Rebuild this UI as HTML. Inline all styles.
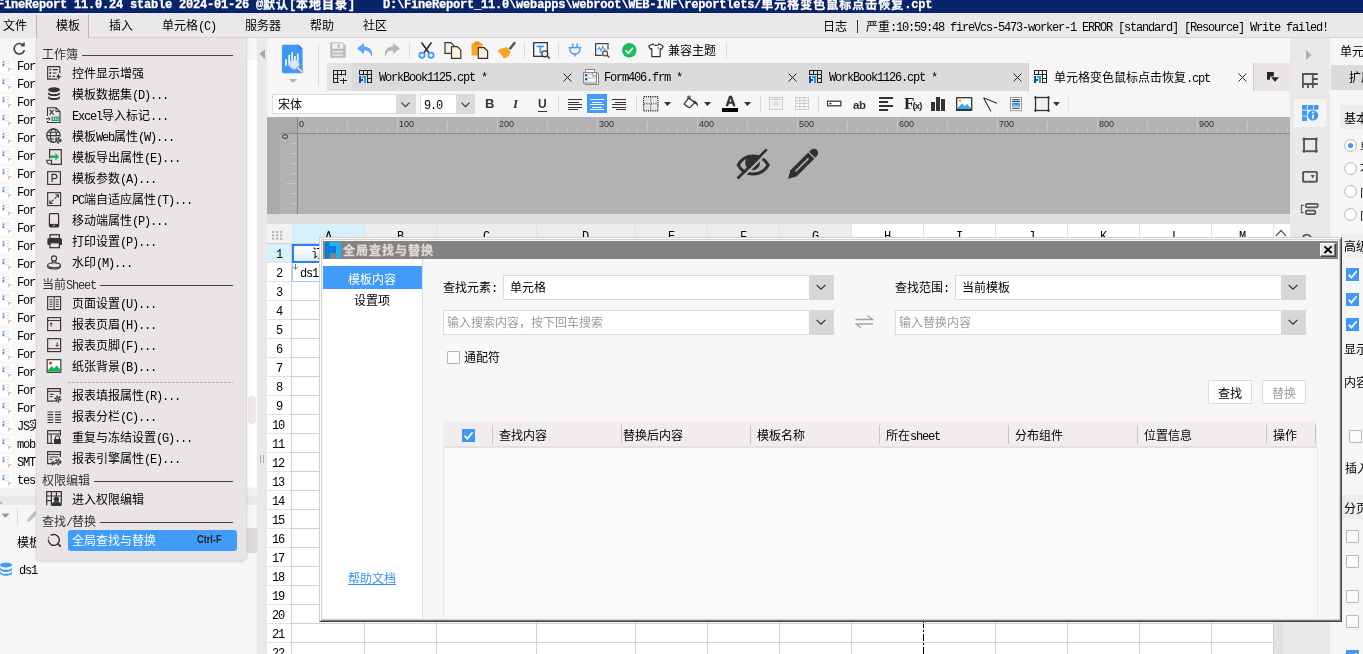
<!DOCTYPE html>
<html lang="zh-CN"><head><meta charset="utf-8"><title>FineReport</title>
<style>
html,body{margin:0;padding:0;}
body{width:1363px;height:654px;overflow:hidden;background:#f7f6f7;}
#app{will-change:transform;position:relative;width:1363px;height:654px;overflow:hidden;font-family:"Liberation Mono","Noto Sans CJK SC",monospace;font-size:12px;color:#000;}
.r{position:absolute;display:block;}
.t{position:absolute;white-space:pre;line-height:14px;height:14px;font-size:12px;}
.l{letter-spacing:-1.2px;}
.tb{position:absolute;white-space:pre;line-height:14px;height:14px;font-size:12px;font-weight:bold;letter-spacing:1px;-webkit-text-stroke:.3px currentColor;}
.tb .l,.tbt .l{letter-spacing:-0.2px;}
.tbt{position:absolute;white-space:pre;line-height:14px;height:14px;font-size:12px;font-weight:bold;letter-spacing:1px;-webkit-text-stroke:.3px currentColor;}
.tbt .c{position:relative;top:1px;}
.sa{position:absolute;white-space:pre;font-family:"Liberation Sans",sans-serif;}
.sa .l{letter-spacing:0;}

</style></head>
<body>
<div id="app">
<div class="r" style="left:0px;top:0px;width:1363px;height:13px;background:#0a246a;"></div>
<div class="tbt" style="left:-3px;top:-2px;color:#fff;"><span class="l">FineReport 11.0.24 stable 2024-01-26 @</span><span class="c">默认</span><span class="l">[</span><span class="c">本地目录</span><span class="l">] &nbsp; &nbsp;D:\FineReport_11.0\webapps\webroot\WEB-INF\reportlets/</span><span class="c">单元格变色鼠标点击恢复</span><span class="l">.cpt</span></div>
<div class="r" style="left:0px;top:13px;width:1363px;height:25px;background:#ebe8ec;"></div>
<div class="r" style="left:36px;top:14px;width:53px;height:24px;background:#e8e4e8;border-left:1px solid #b9b6ba;border-right:1px solid #b9b6ba;border-top:1px solid #f4f2f4;box-sizing:border-box;"></div>
<div class="r" style="left:89px;top:37px;width:1274px;height:1px;background:#d9d6da;"></div>
<div class="t" style="left:3px;top:20px;">文件</div>
<div class="t" style="left:56px;top:20px;">模板</div>
<div class="t" style="left:109px;top:20px;">插入</div>
<div class="t" style="left:162px;top:20px;">单元格<span class="l">(C)</span></div>
<div class="t" style="left:245px;top:20px;">服务器</div>
<div class="t" style="left:310px;top:20px;">帮助</div>
<div class="t" style="left:363px;top:20px;">社区</div>
<div class="t" style="left:823px;top:21px;">日志</div>
<div class="r" style="left:857px;top:20px;width:1px;height:13px;background:#333;"></div>
<div class="t" style="left:866px;top:21px;">严重<span class="l">:10:59:48 fireVcs-5473-worker-1 ERROR [standard] [Resource] Write failed!</span></div>
<div class="r" style="left:0px;top:38px;width:257px;height:22px;background:#f7f6f7;"></div>
<div class="r" style="left:0px;top:60px;width:257px;height:428px;background:#f8f8f8;"></div>
<svg class="r" style="left:12px;top:41px;" width="14" height="15" viewBox="0 0 14 15"><path d="M11.2 4.2A5.2 5.2 0 1 0 12.4 9" fill="none" stroke="#444" stroke-width="1.6"/><path d="M8.2 5.2 L12.8 5.6 L12.6 0.8 Z" fill="#444"/></svg>
<div class="r" style="left:0px;top:59px;width:12px;height:14px;background:#fff;"></div>
<svg class="r" style="left:0px;top:59px;" width="13" height="14" viewBox="0 0 13 14"><rect x="2" y="1" width="8" height="7" fill="#e9e9ea"/><rect x="4.6" y="2.4" width="4.6" height="1.6" fill="#fff"/><rect x="4.6" y="5" width="4.6" height="2" fill="#fff"/><rect x="2.8" y="2.6" width="1.4" height="1.2" fill="#1e86ea"/><rect x="2.8" y="5" width="1.4" height="2" fill="#1e86ea"/><path d="M8 9H12L8 13Z" fill="#c9c9c9"/></svg>
<div class="t" style="left:17px;top:60px;"><span class="l">For</span></div>
<div class="r" style="left:0px;top:77px;width:12px;height:14px;background:#fff;"></div>
<svg class="r" style="left:0px;top:77px;" width="13" height="14" viewBox="0 0 13 14"><rect x="2" y="1" width="8" height="7" fill="#e9e9ea"/><rect x="4.6" y="2.4" width="4.6" height="1.6" fill="#fff"/><rect x="4.6" y="5" width="4.6" height="2" fill="#fff"/><rect x="2.8" y="2.6" width="1.4" height="1.2" fill="#1e86ea"/><rect x="2.8" y="5" width="1.4" height="2" fill="#1e86ea"/><path d="M8 9H12L8 13Z" fill="#c9c9c9"/></svg>
<div class="t" style="left:17px;top:78px;"><span class="l">For</span></div>
<div class="r" style="left:0px;top:95px;width:12px;height:14px;background:#fff;"></div>
<svg class="r" style="left:0px;top:95px;" width="13" height="14" viewBox="0 0 13 14"><rect x="2" y="1" width="8" height="7" fill="#e9e9ea"/><rect x="4.6" y="2.4" width="4.6" height="1.6" fill="#fff"/><rect x="4.6" y="5" width="4.6" height="2" fill="#fff"/><rect x="2.8" y="2.6" width="1.4" height="1.2" fill="#1e86ea"/><rect x="2.8" y="5" width="1.4" height="2" fill="#1e86ea"/><path d="M8 9H12L8 13Z" fill="#c9c9c9"/></svg>
<div class="t" style="left:17px;top:96px;"><span class="l">For</span></div>
<div class="r" style="left:0px;top:113px;width:12px;height:14px;background:#fff;"></div>
<svg class="r" style="left:0px;top:113px;" width="13" height="14" viewBox="0 0 13 14"><rect x="2" y="1" width="8" height="7" fill="#e9e9ea"/><rect x="4.6" y="2.4" width="4.6" height="1.6" fill="#fff"/><rect x="4.6" y="5" width="4.6" height="2" fill="#fff"/><rect x="2.8" y="2.6" width="1.4" height="1.2" fill="#1e86ea"/><rect x="2.8" y="5" width="1.4" height="2" fill="#1e86ea"/><path d="M8 9H12L8 13Z" fill="#c9c9c9"/></svg>
<div class="t" style="left:17px;top:114px;"><span class="l">For</span></div>
<div class="r" style="left:0px;top:131px;width:12px;height:14px;background:#fff;"></div>
<svg class="r" style="left:0px;top:131px;" width="13" height="14" viewBox="0 0 13 14"><rect x="2" y="1" width="8" height="7" fill="#e9e9ea"/><rect x="4.6" y="2.4" width="4.6" height="1.6" fill="#fff"/><rect x="4.6" y="5" width="4.6" height="2" fill="#fff"/><rect x="2.8" y="2.6" width="1.4" height="1.2" fill="#1e86ea"/><rect x="2.8" y="5" width="1.4" height="2" fill="#1e86ea"/><path d="M8 9H12L8 13Z" fill="#c9c9c9"/></svg>
<div class="t" style="left:17px;top:132px;"><span class="l">For</span></div>
<div class="r" style="left:0px;top:149px;width:12px;height:14px;background:#fff;"></div>
<svg class="r" style="left:0px;top:149px;" width="13" height="14" viewBox="0 0 13 14"><rect x="2" y="1" width="8" height="7" fill="#e9e9ea"/><rect x="4.6" y="2.4" width="4.6" height="1.6" fill="#fff"/><rect x="4.6" y="5" width="4.6" height="2" fill="#fff"/><rect x="2.8" y="2.6" width="1.4" height="1.2" fill="#1e86ea"/><rect x="2.8" y="5" width="1.4" height="2" fill="#1e86ea"/><path d="M8 9H12L8 13Z" fill="#c9c9c9"/></svg>
<div class="t" style="left:17px;top:150px;"><span class="l">For</span></div>
<div class="r" style="left:0px;top:167px;width:12px;height:14px;background:#fff;"></div>
<svg class="r" style="left:0px;top:167px;" width="13" height="14" viewBox="0 0 13 14"><rect x="2" y="1" width="8" height="7" fill="#e9e9ea"/><rect x="4.6" y="2.4" width="4.6" height="1.6" fill="#fff"/><rect x="4.6" y="5" width="4.6" height="2" fill="#fff"/><rect x="2.8" y="2.6" width="1.4" height="1.2" fill="#1e86ea"/><rect x="2.8" y="5" width="1.4" height="2" fill="#1e86ea"/><path d="M8 9H12L8 13Z" fill="#c9c9c9"/></svg>
<div class="t" style="left:17px;top:168px;"><span class="l">For</span></div>
<div class="r" style="left:0px;top:185px;width:12px;height:14px;background:#fff;"></div>
<svg class="r" style="left:0px;top:185px;" width="13" height="14" viewBox="0 0 13 14"><rect x="2" y="1" width="8" height="7" fill="#e9e9ea"/><rect x="4.6" y="2.4" width="4.6" height="1.6" fill="#fff"/><rect x="4.6" y="5" width="4.6" height="2" fill="#fff"/><rect x="2.8" y="2.6" width="1.4" height="1.2" fill="#1e86ea"/><rect x="2.8" y="5" width="1.4" height="2" fill="#1e86ea"/><path d="M8 9H12L8 13Z" fill="#c9c9c9"/></svg>
<div class="t" style="left:17px;top:186px;"><span class="l">For</span></div>
<div class="r" style="left:0px;top:203px;width:12px;height:14px;background:#fff;"></div>
<svg class="r" style="left:0px;top:203px;" width="13" height="14" viewBox="0 0 13 14"><rect x="2" y="1" width="8" height="7" fill="#e9e9ea"/><rect x="4.6" y="2.4" width="4.6" height="1.6" fill="#fff"/><rect x="4.6" y="5" width="4.6" height="2" fill="#fff"/><rect x="2.8" y="2.6" width="1.4" height="1.2" fill="#1e86ea"/><rect x="2.8" y="5" width="1.4" height="2" fill="#1e86ea"/><path d="M8 9H12L8 13Z" fill="#c9c9c9"/></svg>
<div class="t" style="left:17px;top:204px;"><span class="l">For</span></div>
<div class="r" style="left:0px;top:221px;width:12px;height:14px;background:#fff;"></div>
<svg class="r" style="left:0px;top:221px;" width="13" height="14" viewBox="0 0 13 14"><rect x="2" y="1" width="8" height="7" fill="#e9e9ea"/><rect x="4.6" y="2.4" width="4.6" height="1.6" fill="#fff"/><rect x="4.6" y="5" width="4.6" height="2" fill="#fff"/><rect x="2.8" y="2.6" width="1.4" height="1.2" fill="#1e86ea"/><rect x="2.8" y="5" width="1.4" height="2" fill="#1e86ea"/><path d="M8 9H12L8 13Z" fill="#c9c9c9"/></svg>
<div class="t" style="left:17px;top:222px;"><span class="l">For</span></div>
<div class="r" style="left:0px;top:239px;width:12px;height:14px;background:#fff;"></div>
<svg class="r" style="left:0px;top:239px;" width="13" height="14" viewBox="0 0 13 14"><rect x="2" y="1" width="8" height="7" fill="#e9e9ea"/><rect x="4.6" y="2.4" width="4.6" height="1.6" fill="#fff"/><rect x="4.6" y="5" width="4.6" height="2" fill="#fff"/><rect x="2.8" y="2.6" width="1.4" height="1.2" fill="#1e86ea"/><rect x="2.8" y="5" width="1.4" height="2" fill="#1e86ea"/><path d="M8 9H12L8 13Z" fill="#c9c9c9"/></svg>
<div class="t" style="left:17px;top:240px;"><span class="l">For</span></div>
<div class="r" style="left:0px;top:257px;width:12px;height:14px;background:#fff;"></div>
<svg class="r" style="left:0px;top:257px;" width="13" height="14" viewBox="0 0 13 14"><rect x="2" y="1" width="8" height="7" fill="#e9e9ea"/><rect x="4.6" y="2.4" width="4.6" height="1.6" fill="#fff"/><rect x="4.6" y="5" width="4.6" height="2" fill="#fff"/><rect x="2.8" y="2.6" width="1.4" height="1.2" fill="#1e86ea"/><rect x="2.8" y="5" width="1.4" height="2" fill="#1e86ea"/><path d="M8 9H12L8 13Z" fill="#c9c9c9"/></svg>
<div class="t" style="left:17px;top:258px;"><span class="l">For</span></div>
<div class="r" style="left:0px;top:275px;width:12px;height:14px;background:#fff;"></div>
<svg class="r" style="left:0px;top:275px;" width="13" height="14" viewBox="0 0 13 14"><rect x="2" y="1" width="8" height="7" fill="#e9e9ea"/><rect x="4.6" y="2.4" width="4.6" height="1.6" fill="#fff"/><rect x="4.6" y="5" width="4.6" height="2" fill="#fff"/><rect x="2.8" y="2.6" width="1.4" height="1.2" fill="#1e86ea"/><rect x="2.8" y="5" width="1.4" height="2" fill="#1e86ea"/><path d="M8 9H12L8 13Z" fill="#c9c9c9"/></svg>
<div class="t" style="left:17px;top:276px;"><span class="l">For</span></div>
<div class="r" style="left:0px;top:293px;width:12px;height:14px;background:#fff;"></div>
<svg class="r" style="left:0px;top:293px;" width="13" height="14" viewBox="0 0 13 14"><rect x="2" y="1" width="8" height="7" fill="#e9e9ea"/><rect x="4.6" y="2.4" width="4.6" height="1.6" fill="#fff"/><rect x="4.6" y="5" width="4.6" height="2" fill="#fff"/><rect x="2.8" y="2.6" width="1.4" height="1.2" fill="#1e86ea"/><rect x="2.8" y="5" width="1.4" height="2" fill="#1e86ea"/><path d="M8 9H12L8 13Z" fill="#c9c9c9"/></svg>
<div class="t" style="left:17px;top:294px;"><span class="l">For</span></div>
<div class="r" style="left:0px;top:311px;width:12px;height:14px;background:#fff;"></div>
<svg class="r" style="left:0px;top:311px;" width="13" height="14" viewBox="0 0 13 14"><rect x="2" y="1" width="8" height="7" fill="#e9e9ea"/><rect x="4.6" y="2.4" width="4.6" height="1.6" fill="#fff"/><rect x="4.6" y="5" width="4.6" height="2" fill="#fff"/><rect x="2.8" y="2.6" width="1.4" height="1.2" fill="#1e86ea"/><rect x="2.8" y="5" width="1.4" height="2" fill="#1e86ea"/><path d="M8 9H12L8 13Z" fill="#c9c9c9"/></svg>
<div class="t" style="left:17px;top:312px;"><span class="l">For</span></div>
<div class="r" style="left:0px;top:329px;width:12px;height:14px;background:#fff;"></div>
<svg class="r" style="left:0px;top:329px;" width="13" height="14" viewBox="0 0 13 14"><rect x="2" y="1" width="8" height="7" fill="#e9e9ea"/><rect x="4.6" y="2.4" width="4.6" height="1.6" fill="#fff"/><rect x="4.6" y="5" width="4.6" height="2" fill="#fff"/><rect x="2.8" y="2.6" width="1.4" height="1.2" fill="#1e86ea"/><rect x="2.8" y="5" width="1.4" height="2" fill="#1e86ea"/><path d="M8 9H12L8 13Z" fill="#c9c9c9"/></svg>
<div class="t" style="left:17px;top:330px;"><span class="l">For</span></div>
<div class="r" style="left:0px;top:347px;width:12px;height:14px;background:#fff;"></div>
<svg class="r" style="left:0px;top:347px;" width="13" height="14" viewBox="0 0 13 14"><rect x="2" y="1" width="8" height="7" fill="#e9e9ea"/><rect x="4.6" y="2.4" width="4.6" height="1.6" fill="#fff"/><rect x="4.6" y="5" width="4.6" height="2" fill="#fff"/><rect x="2.8" y="2.6" width="1.4" height="1.2" fill="#1e86ea"/><rect x="2.8" y="5" width="1.4" height="2" fill="#1e86ea"/><path d="M8 9H12L8 13Z" fill="#c9c9c9"/></svg>
<div class="t" style="left:17px;top:348px;"><span class="l">For</span></div>
<div class="r" style="left:0px;top:365px;width:12px;height:14px;background:#fff;"></div>
<svg class="r" style="left:0px;top:365px;" width="13" height="14" viewBox="0 0 13 14"><rect x="2" y="1" width="8" height="7" fill="#e9e9ea"/><rect x="4.6" y="2.4" width="4.6" height="1.6" fill="#fff"/><rect x="4.6" y="5" width="4.6" height="2" fill="#fff"/><rect x="2.8" y="2.6" width="1.4" height="1.2" fill="#1e86ea"/><rect x="2.8" y="5" width="1.4" height="2" fill="#1e86ea"/><path d="M8 9H12L8 13Z" fill="#c9c9c9"/></svg>
<div class="t" style="left:17px;top:366px;"><span class="l">For</span></div>
<div class="r" style="left:0px;top:383px;width:12px;height:14px;background:#fff;"></div>
<svg class="r" style="left:0px;top:383px;" width="13" height="14" viewBox="0 0 13 14"><rect x="2" y="1" width="8" height="7" fill="#e9e9ea"/><rect x="4.6" y="2.4" width="4.6" height="1.6" fill="#fff"/><rect x="4.6" y="5" width="4.6" height="2" fill="#fff"/><rect x="2.8" y="2.6" width="1.4" height="1.2" fill="#1e86ea"/><rect x="2.8" y="5" width="1.4" height="2" fill="#1e86ea"/><path d="M8 9H12L8 13Z" fill="#c9c9c9"/></svg>
<div class="t" style="left:17px;top:384px;"><span class="l">For</span></div>
<div class="r" style="left:0px;top:401px;width:12px;height:14px;background:#fff;"></div>
<svg class="r" style="left:0px;top:401px;" width="13" height="14" viewBox="0 0 13 14"><rect x="2" y="1" width="8" height="7" fill="#e9e9ea"/><rect x="4.6" y="2.4" width="4.6" height="1.6" fill="#fff"/><rect x="4.6" y="5" width="4.6" height="2" fill="#fff"/><rect x="2.8" y="2.6" width="1.4" height="1.2" fill="#1e86ea"/><rect x="2.8" y="5" width="1.4" height="2" fill="#1e86ea"/><path d="M8 9H12L8 13Z" fill="#c9c9c9"/></svg>
<div class="t" style="left:17px;top:402px;"><span class="l">For</span></div>
<div class="r" style="left:0px;top:419px;width:12px;height:14px;background:#fff;"></div>
<svg class="r" style="left:0px;top:419px;" width="13" height="14" viewBox="0 0 13 14"><rect x="2" y="1" width="8" height="7" fill="#e9e9ea"/><rect x="4.6" y="2.4" width="4.6" height="1.6" fill="#fff"/><rect x="4.6" y="5" width="4.6" height="2" fill="#fff"/><rect x="2.8" y="2.6" width="1.4" height="1.2" fill="#1e86ea"/><rect x="2.8" y="5" width="1.4" height="2" fill="#1e86ea"/><path d="M8 9H12L8 13Z" fill="#c9c9c9"/></svg>
<div class="t" style="left:17px;top:420px;"><span class="l">JS</span>实</div>
<div class="r" style="left:0px;top:437px;width:12px;height:14px;background:#fff;"></div>
<svg class="r" style="left:0px;top:437px;" width="13" height="14" viewBox="0 0 13 14"><rect x="2" y="1" width="8" height="7" fill="#e9e9ea"/><rect x="4.6" y="2.4" width="4.6" height="1.6" fill="#fff"/><rect x="4.6" y="5" width="4.6" height="2" fill="#fff"/><rect x="2.8" y="2.6" width="1.4" height="1.2" fill="#1e86ea"/><rect x="2.8" y="5" width="1.4" height="2" fill="#1e86ea"/><path d="M8 9H12L8 13Z" fill="#c9c9c9"/></svg>
<div class="t" style="left:17px;top:438px;"><span class="l">mob</span></div>
<div class="r" style="left:0px;top:455px;width:12px;height:14px;background:#fff;"></div>
<svg class="r" style="left:0px;top:455px;" width="13" height="14" viewBox="0 0 13 14"><rect x="2" y="1" width="8" height="7" fill="#e9e9ea"/><rect x="4.6" y="2.4" width="4.6" height="1.6" fill="#fff"/><rect x="4.6" y="5" width="4.6" height="2" fill="#fff"/><rect x="2.8" y="2.6" width="1.4" height="1.2" fill="#1e86ea"/><rect x="2.8" y="5" width="1.4" height="2" fill="#1e86ea"/><path d="M8 9H12L8 13Z" fill="#c9c9c9"/></svg>
<div class="t" style="left:17px;top:456px;"><span class="l">SMT</span></div>
<div class="r" style="left:0px;top:473px;width:12px;height:14px;background:#fff;"></div>
<svg class="r" style="left:0px;top:473px;" width="13" height="14" viewBox="0 0 13 14"><rect x="2" y="1" width="8" height="7" fill="#e9e9ea"/><rect x="4.6" y="2.4" width="4.6" height="1.6" fill="#fff"/><rect x="4.6" y="5" width="4.6" height="2" fill="#fff"/><rect x="2.8" y="2.6" width="1.4" height="1.2" fill="#1e86ea"/><rect x="2.8" y="5" width="1.4" height="2" fill="#1e86ea"/><path d="M8 9H12L8 13Z" fill="#c9c9c9"/></svg>
<div class="t" style="left:17px;top:474px;"><span class="l">tes</span></div>
<div class="r" style="left:247px;top:60px;width:10px;height:426px;background:#fff;"></div>
<div class="r" style="left:248px;top:396px;width:8px;height:28px;background:#ebe7eb;border-radius:4px;"></div>
<div class="r" style="left:0px;top:488px;width:257px;height:7px;background:#f1eff1;"></div>
<div class="r" style="left:0px;top:495px;width:257px;height:10px;background:#ebe8ec;"></div>
<div class="r" style="left:0px;top:495px;width:257px;height:1px;background:#f6f5f6;"></div>
<svg class="r" style="left:0px;top:499px;" width="4" height="6" viewBox="0 0 4 6"><path d="M-2 1.5L2.2 5" fill="none" stroke="#aaa" stroke-width="1.3"/></svg>
<div class="r" style="left:0px;top:505px;width:257px;height:23px;background:#f7f6f7;"></div>
<svg class="r" style="left:1px;top:512px;" width="10" height="8" viewBox="0 0 10 8"><path d="M0.5 1.5H8.5L4.5 6Z" fill="#999"/></svg>
<div class="r" style="left:17px;top:508px;width:1px;height:17px;background:#dcdadc;"></div>
<svg class="r" style="left:26px;top:509px;" width="13" height="14" viewBox="0 0 13 14"><path d="M1 13 L2.2 9 L9.5 1.5 L12 4 L4.8 11.6 Z" fill="#c4c2c4"/></svg>
<div class="r" style="left:0px;top:528px;width:257px;height:25px;background:#dddadd;"></div>
<div class="r" style="left:0px;top:528px;width:128px;height:25px;background:#f7f6f7;"></div>
<div class="t" style="left:17px;top:537px;">模板数据集</div>
<svg class="r" style="left:0px;top:562px;" width="13" height="14" viewBox="0 0 13 14"><ellipse cx="6" cy="3" rx="6" ry="2.6" fill="#419bf9"/><path d="M0 5.2 C0 8.6 12 8.6 12 5.2 V7.2 C12 10.8 0 10.8 0 7.2Z" fill="#419bf9"/><path d="M0 9.2 C0 12.6 12 12.6 12 9.2 V11 C12 14.6 0 14.6 0 11Z" fill="#419bf9"/></svg>
<div class="t" style="left:19px;top:564px;"><span class="l">ds1</span></div>
<div class="r" style="left:257px;top:38px;width:10px;height:616px;background:#ebe8ec;"></div>
<svg class="r" style="left:258px;top:48px;" width="8" height="12" viewBox="0 0 8 12"><path d="M7 1 V11 L1.5 6 Z" fill="#a9a7a9"/></svg>
<div class="r" style="left:260px;top:455px;width:1px;height:8px;background:#aaa;"></div>
<div class="r" style="left:263px;top:455px;width:1px;height:8px;background:#aaa;"></div>
<div class="r" style="left:267px;top:38px;width:1023px;height:79px;background:#f7f6f7;"></div>
<svg class="r" style="left:281px;top:44px;" width="24" height="32" viewBox="0 0 24 32"><path d="M2.5 .8H17.6L21.6 4.8V27.6a1.6 1.6 0 0 1-1.6 1.6H2.5A1.6 1.6 0 0 1 .9 27.6V2.4A1.6 1.6 0 0 1 2.5 .8Z" fill="#3f97f7"/>
<path d="M17.6 .8V4.8H21.6Z" fill="#2a7de0"/>
<rect x="4.2" y="15.2" width="1.6" height="6.4" fill="#fff"/><rect x="7.4" y="11" width="1.6" height="10.6" fill="#fff"/><rect x="10.4" y="8" width="1.5" height="10" fill="#fff"/><rect x="13.2" y="12" width="1.5" height="6" fill="#fff"/><rect x="16" y="9.6" width="1.6" height="9" fill="#fff"/>
<circle cx="13.4" cy="20.4" r="4.7" fill="#e6eef9" fill-opacity=".9" stroke="#c9ccd2" stroke-width="1.1"/>
<path d="M16.9 24L21 28" stroke="#8a8a8a" stroke-width="2.6" stroke-linecap="round"/><path d="M16.9 24L21 28" stroke="#efefef" stroke-width="1.4" stroke-linecap="round"/></svg>
<svg class="r" style="left:289px;top:79px;" width="9" height="5" viewBox="0 0 9 5"><path d="M0 0H8L4 4Z" fill="#b5b3b5"/></svg>
<div class="r" style="left:318px;top:44px;width:1px;height:42px;background:#dcdadc;"></div>
<svg class="r" style="left:330px;top:42px;" width="16" height="16" viewBox="0 0 16 16"><path d="M1.4 .3H12.4L15.8 3.6V14.4a1.3 1.3 0 0 1-1.3 1.3H1.5A1.3 1.3 0 0 1 .2 14.4V1.5A1.2 1.2 0 0 1 1.4 .3Z" fill="#bdbbbd"/><rect x="2.4" y="1.2" width="10.8" height="5.4" fill="#f3f2f3"/><rect x="7.4" y="2.2" width="2.6" height="3.6" fill="#bdbbbd"/><rect x="2.4" y="9.2" width="10.6" height="1.2" fill="#f3f2f3"/><rect x="2.4" y="12.5" width="10.6" height="1.2" fill="#f3f2f3"/></svg>
<svg class="r" style="left:357px;top:43px;" width="17" height="15" viewBox="0 0 17 15"><path d="M7 0 L0 5.5 L7 11 V7.6 C11 7.4 13.6 9.4 14.6 14 C16.6 8 13 3.6 7 3.4 Z" fill="#5ba6f8"/></svg>
<svg class="r" style="left:383px;top:43px;" width="17" height="15" viewBox="0 0 17 15"><path d="M10 0 L17 5.5 L10 11 V7.6 C6 7.4 3.4 9.4 2.4 14 C0.4 8 4 3.6 10 3.4 Z" fill="#b9b7b9"/></svg>
<div class="r" style="left:409px;top:43px;width:1px;height:16px;background:#dcdadc;"></div>
<svg class="r" style="left:418px;top:42px;" width="17" height="17" viewBox="0 0 17 17"><path d="M3.5 0.5 L11.5 11.5 M13.5 0.5 L5.5 11.5" stroke="#333" stroke-width="1.7" fill="none"/><circle cx="4" cy="13.2" r="2.6" fill="none" stroke="#3f97f7" stroke-width="1.7"/><circle cx="13" cy="13.2" r="2.6" fill="none" stroke="#3f97f7" stroke-width="1.7"/></svg>
<svg class="r" style="left:444px;top:42px;" width="18" height="17" viewBox="0 0 18 17"><path d="M1 .7H7L10 3.7V11.3H1Z" fill="#fdf4dd" stroke="#333" stroke-width="1.2"/><path d="M7.5 4.7H13.5L16.8 7.9V16.3H7.5Z" fill="#fdf4dd" stroke="#333" stroke-width="1.2"/></svg>
<svg class="r" style="left:471px;top:41px;" width="18" height="18" viewBox="0 0 18 18"><rect x=".5" y="2" width="11" height="12.5" rx="1" fill="#f6a623"/><rect x="3.5" y=".5" width="5" height="3" rx=".8" fill="#e38f0c"/><path d="M7.3 6.7H13.2L16.6 10V17.3H7.3Z" fill="#fdf4dd" stroke="#333" stroke-width="1.2"/></svg>
<svg class="r" style="left:497px;top:41px;" width="19" height="18" viewBox="0 0 19 18"><path d="M11.5 7.5 L16.5 1.2 a1.3 1.3 0 0 1 2 1.6 L13.5 9Z" fill="#555"/><path d="M2 8.5 L9.5 6 L13.5 10.5 C13 14.5 10 17.5 6.5 17.5 C5.5 15 3.5 11.5 0.5 10.5Z" fill="#f6a623"/></svg>
<div class="r" style="left:524px;top:43px;width:1px;height:16px;background:#dcdadc;"></div>
<svg class="r" style="left:533px;top:42px;" width="18" height="17" viewBox="0 0 18 17"><rect x=".7" y=".7" width="13.6" height="13.6" fill="#fff" stroke="#333" stroke-width="1.3"/><path d="M3.6 3.5H11.2V5.3H8.3V11.5H6.5V5.3H3.6Z" fill="#3f97f7"/><circle cx="11.8" cy="11.8" r="3" fill="#f4f4f4" stroke="#333" stroke-width="1.2"/><path d="M14 14 L16.8 16.6" stroke="#333" stroke-width="1.4"/></svg>
<div class="r" style="left:558px;top:43px;width:1px;height:16px;background:#dcdadc;"></div>
<svg class="r" style="left:568px;top:43px;" width="14" height="14" viewBox="0 0 14 14"><path d="M4.7 .4V4.4M9.2 .4V4.4" stroke="#4a9df8" stroke-width="1.5"/><path d="M.4 4.6H13.5" stroke="#4a9df8" stroke-width="1.4"/><path d="M2.1 4.6V6.6C2.1 9.6 4.4 11 6.95 11C9.5 11 11.8 9.6 11.8 6.6V4.6" fill="none" stroke="#4a9df8" stroke-width="1.4"/><path d="M6.95 11V13.6" stroke="#4a9df8" stroke-width="1.5"/></svg>
<svg class="r" style="left:595px;top:43px;" width="15" height="15" viewBox="0 0 15 15"><path d="M7.4 12.4H.6V.6H13V6.4" fill="none" stroke="#444" stroke-width="1.2"/><path d="M2.4 6.8L4.4 4.6L6 8L7.8 3.6L9.2 6.2H10.8" fill="none" stroke="#3f97f7" stroke-width="1.1"/><circle cx="10.1" cy="10.4" r="2.5" fill="#f7f6f7" stroke="#444" stroke-width="1.1"/><path d="M12 12.3L14.4 14.4" stroke="#444" stroke-width="1.3"/></svg>
<svg class="r" style="left:622px;top:43px;" width="15" height="15" viewBox="0 0 15 15"><circle cx="7.3" cy="7.3" r="7.2" fill="#17bd58"/><path d="M3.6 7.4 L6.4 10.1 L11 4.9" fill="none" stroke="#fff" stroke-width="1.9"/></svg>
<svg class="r" style="left:648px;top:43px;" width="16" height="15" viewBox="0 0 16 15"><path d="M5 .8 L.8 3.2 L2.4 6.2 L3.8 5.6 V13.6 H12.2 V5.6 L13.6 6.2 L15.2 3.2 L11 .8 C10.4 3 5.6 3 5 .8Z" fill="#fff" stroke="#333" stroke-width="1.2" stroke-linejoin="round"/><circle cx="10.2" cy="5" r=".9" fill="#3f97f7"/></svg>
<div class="t" style="left:668px;top:45px;">兼容主题</div>
<div class="r" style="left:726px;top:43px;width:1px;height:16px;background:#dcdadc;"></div>
<div class="r" style="left:327px;top:63px;width:25px;height:28px;background:#e6e3e7;"></div>
<div class="r" style="left:352px;top:63px;width:677px;height:28px;background:#dddadd;"></div>
<div class="r" style="left:1254px;top:63px;width:36px;height:28px;background:#e8e4e8;"></div>
<svg class="r" style="left:333px;top:70px;" width="14" height="14" viewBox="0 0 14 14"><path d="M0 0H13V1H0ZM0 4H13V5H0ZM0 0H1V13H0ZM4 0H5V13H4ZM8 0H9V5.6H8ZM12 0H13V5.6H12ZM0 8H5.6V9H0ZM0 12H5.6V13H0ZM10 8H11V14H10ZM7 10H14V11H7Z" fill="#222"/></svg>
<svg class="r" style="left:359px;top:70px;" width="14" height="14" viewBox="0 0 14 14"><path d="M0 0H13V1H0ZM0 4H13V5H0ZM0 0H1V5H0ZM4 0H5V5H4ZM8 0H9V13H8ZM12 0H13V13H12ZM8 8H13V9H8ZM8 12H13V13H8Z" fill="#222"/><path d="M0 6H2V9H4V11H2V13H0Z" fill="#0a4fb3"/><path d="M3 6H7V13H5V7.7H3Z" fill="#1e9fe6"/></svg>
<div class="t" style="left:379px;top:71px;"><span class="l">WorkBook1125.cpt *</span></div>
<svg class="r" style="left:563px;top:73px;" width="9" height="9" viewBox="0 0 9 9"><path d="M.5 .5L8.5 8.5M8.5 .5L.5 8.5" stroke="#222" stroke-width="1"/></svg>
<svg class="r" style="left:583px;top:69px;" width="17" height="17" viewBox="0 0 17 17"><path d="M2.5 .5H11.6L15.5 4.4V15.5H2.5Z" fill="#fff" stroke="#858585" stroke-width="1"/><path d="M11.6 .5V4.4H15.5" fill="#fff" stroke="#858585" stroke-width="1"/><rect x=".5" y="3.5" width="13" height="10.6" fill="#e9e9e9" stroke="#858585" stroke-width="1"/><path d="M9.6 3.5V7H13.5" fill="#fff" stroke="#858585" stroke-width="1"/><rect x="2" y="5.2" width="2" height="2" fill="#0a4fb3"/><rect x="2" y="9.2" width="2" height="2" fill="#0a4fb3"/><rect x="5" y="5.6" width="4.4" height="2" fill="#fff"/><rect x="5" y="9.4" width="7.4" height="2.6" fill="#fff"/><path d="M4.6 5.2H9M4.6 5.2V7.6M4.6 9H12.4M4.6 9V12" stroke="#bdbdbd" stroke-width=".8" fill="none"/></svg>
<div class="t" style="left:604px;top:71px;"><span class="l">Form406.frm *</span></div>
<svg class="r" style="left:788px;top:73px;" width="9" height="9" viewBox="0 0 9 9"><path d="M.5 .5L8.5 8.5M8.5 .5L.5 8.5" stroke="#222" stroke-width="1"/></svg>
<svg class="r" style="left:809px;top:70px;" width="14" height="14" viewBox="0 0 14 14"><path d="M0 0H13V1H0ZM0 4H13V5H0ZM0 0H1V5H0ZM4 0H5V5H4ZM8 0H9V13H8ZM12 0H13V13H12ZM8 8H13V9H8ZM8 12H13V13H8Z" fill="#222"/><path d="M0 6H2V9H4V11H2V13H0Z" fill="#0a4fb3"/><path d="M3 6H7V13H5V7.7H3Z" fill="#1e9fe6"/></svg>
<div class="t" style="left:829px;top:71px;"><span class="l">WorkBook1126.cpt *</span></div>
<svg class="r" style="left:1013px;top:73px;" width="9" height="9" viewBox="0 0 9 9"><path d="M.5 .5L8.5 8.5M8.5 .5L.5 8.5" stroke="#222" stroke-width="1"/></svg>
<div class="r" style="left:1028px;top:63px;width:226px;height:28px;background:#f7f6f7;border-left:1px solid #cfccd0;border-right:1px solid #cfccd0;box-sizing:border-box;"></div>
<svg class="r" style="left:1034px;top:70px;" width="14" height="14" viewBox="0 0 14 14"><path d="M0 0H13V1H0ZM0 4H13V5H0ZM0 0H1V5H0ZM4 0H5V5H4ZM8 0H9V13H8ZM12 0H13V13H12ZM8 8H13V9H8ZM8 12H13V13H8Z" fill="#222"/><path d="M0 6H2V9H4V11H2V13H0Z" fill="#0a4fb3"/><path d="M3 6H7V13H5V7.7H3Z" fill="#1e9fe6"/></svg>
<div class="t" style="left:1054px;top:72px;">单元格变色鼠标点击恢复<span class="l">.cpt</span></div>
<svg class="r" style="left:1238px;top:73px;" width="9" height="9" viewBox="0 0 9 9"><path d="M.5 .5L8.5 8.5M8.5 .5L.5 8.5" stroke="#222" stroke-width="1"/></svg>
<svg class="r" style="left:1267px;top:72px;" width="13" height="11" viewBox="0 0 13 11"><path d="M0 0H6.8V4.4H3V7.8H0Z" fill="#262626"/><path d="M4 5.2H12L8 9.8Z" fill="#262626"/></svg>
<div class="r" style="left:272px;top:94px;width:144px;height:20px;background:#fff;border:1px solid #dcdadc;box-sizing:border-box;"></div>
<div class="r" style="left:396px;top:94px;width:20px;height:20px;background:#dcd9dd;"></div>
<svg class="r" style="left:401px;top:102px;" width="9" height="6" viewBox="0 0 9 6"><path d="M.5 .7L4.5 4.7L8.5 .7" fill="none" stroke="#333" stroke-width="1.1"/></svg>
<div class="t" style="left:278px;top:99px;">宋体</div>
<div class="r" style="left:420px;top:94px;width:55px;height:20px;background:#fff;border:1px solid #dcdadc;box-sizing:border-box;"></div>
<div class="r" style="left:456px;top:94px;width:19px;height:20px;background:#dcd9dd;"></div>
<svg class="r" style="left:461px;top:102px;" width="9" height="6" viewBox="0 0 9 6"><path d="M.5 .7L4.5 4.7L8.5 .7" fill="none" stroke="#333" stroke-width="1.1"/></svg>
<div class="t" style="left:424px;top:99px;"><span class="l">9.0</span></div>
<div class="sa" style="left:485px;top:96px;font-size:13px;line-height:16px;font-weight:bold;color:#333;">B</div>
<div class="sa" style="left:513px;top:96px;font-size:13px;line-height:16px;font-weight:bold;font-style:italic;color:#333;font-family:'Liberation Serif',serif;">I</div>
<div class="sa" style="left:538px;top:96px;font-size:12px;line-height:16px;font-weight:bold;color:#333;">U</div>
<div class="r" style="left:538px;top:111px;width:9px;height:1px;background:#333;"></div>
<div class="r" style="left:558px;top:96px;width:1px;height:16px;background:#dcdadc;"></div>
<div class="r" style="left:568px;top:99.0px;width:14px;height:1.1px;background:#333;"></div>
<div class="r" style="left:568px;top:101.6px;width:11px;height:1.1px;background:#333;"></div>
<div class="r" style="left:568px;top:104.2px;width:14px;height:1.1px;background:#333;"></div>
<div class="r" style="left:568px;top:106.8px;width:14px;height:1.1px;background:#333;"></div>
<div class="r" style="left:568px;top:109.4px;width:10px;height:1.1px;background:#333;"></div>
<div class="r" style="left:587px;top:94px;width:20px;height:19px;background:#419bf9;"></div>
<div class="r" style="left:590.0px;top:99.0px;width:14px;height:1.1px;background:#fff;"></div>
<div class="r" style="left:592.0px;top:101.6px;width:10px;height:1.1px;background:#fff;"></div>
<div class="r" style="left:590.0px;top:104.2px;width:14px;height:1.1px;background:#fff;"></div>
<div class="r" style="left:592.0px;top:106.8px;width:10px;height:1.1px;background:#fff;"></div>
<div class="r" style="left:590.0px;top:109.4px;width:14px;height:1.1px;background:#fff;"></div>
<div class="r" style="left:612px;top:99.0px;width:14px;height:1.1px;background:#333;"></div>
<div class="r" style="left:615px;top:101.6px;width:11px;height:1.1px;background:#333;"></div>
<div class="r" style="left:612px;top:104.2px;width:14px;height:1.1px;background:#333;"></div>
<div class="r" style="left:612px;top:106.8px;width:14px;height:1.1px;background:#333;"></div>
<div class="r" style="left:616px;top:109.4px;width:10px;height:1.1px;background:#333;"></div>
<div class="r" style="left:636px;top:96px;width:1px;height:16px;background:#dcdadc;"></div>
<svg class="r" style="left:643px;top:96px;" width="16" height="16" viewBox="0 0 16 16"><rect x=".6" y=".6" width="14.3" height="14.3" fill="#e9e5e9" stroke="#111" stroke-width="1.2" stroke-dasharray="1.1 1.1"/><path d="M7.75 1.4V14.2M1.4 7.75H14.2" stroke="#333" stroke-width=".9" stroke-dasharray="1.1 1.1"/></svg>
<svg class="r" style="left:664px;top:102px;" width="8" height="5" viewBox="0 0 8 5"><path d="M0 0H7L3.5 4Z" fill="#333"/></svg>
<svg class="r" style="left:683px;top:95px;overflow:visible;" width="17" height="18" viewBox="0 0 17 18"><path d="M5.8 2.9L1.1 8.9L6.4 12.9L11.7 7.6Z" fill="#fff" stroke="#333" stroke-width="1.3" stroke-linejoin="round"/><rect x="4.9" y="1.2" width="2.1" height="2.6" fill="none" stroke="#333" stroke-width=".9"/><path d="M10.4 5.4C13.6 5.8 15.4 8.6 15 11.8C14 9.8 12.6 8.8 11.2 8.2Z" fill="#333"/><rect x="-1" y="13.1" width="16" height="3.7" fill="#fff"/></svg>
<svg class="r" style="left:704px;top:102px;" width="8" height="5" viewBox="0 0 8 5"><path d="M0 0H7L3.5 4Z" fill="#333"/></svg>
<div class="sa" style="left:722px;top:93px;font-size:14px;line-height:16px;font-weight:bold;color:#333;width:17px;-webkit-text-stroke:.5px #333;text-align:center;">A</div>
<div class="r" style="left:722px;top:108px;width:16px;height:4px;background:#000;"></div>
<svg class="r" style="left:744px;top:102px;" width="8" height="5" viewBox="0 0 8 5"><path d="M0 0H7L3.5 4Z" fill="#333"/></svg>
<div class="r" style="left:760px;top:96px;width:1px;height:16px;background:#dcdadc;"></div>
<svg class="r" style="left:769px;top:97px;" width="15" height="14" viewBox="0 0 15 14"><rect x=".5" y=".5" width="13" height="12" fill="#f3f2f3" stroke="#cfcdcf"/><path d="M.5 2.6H13.5M7 .5V2.6M7 10.8V12.5" stroke="#cfcdcf"/><rect x="4.6" y="4.4" width="4.8" height="5" fill="#dedcde"/></svg>
<svg class="r" style="left:795px;top:97px;" width="15" height="14" viewBox="0 0 15 14"><rect x=".5" y=".5" width="13" height="12" fill="#f8f8f8" stroke="#cfcdcf"/><path d="M.5 3.5H13.5M.5 6.5H13.5M.5 9.5H13.5M4.8 .5V12.5M9.2 .5V12.5" stroke="#cfcdcf"/></svg>
<div class="r" style="left:818px;top:96px;width:1px;height:16px;background:#dcdadc;"></div>
<svg class="r" style="left:827px;top:100px;" width="15" height="7" viewBox="0 0 15 7"><rect x=".4" y="1.2" width="13.4" height="4.6" fill="#fff" stroke="#333" stroke-width="1.2"/><rect x="2.3" y="2.8" width="2.2" height="1.5" fill="#333"/></svg>
<div class="sa" style="left:853px;top:97px;font-size:11.5px;line-height:16px;font-weight:bold;color:#333;letter-spacing:-.4px;">ab</div>
<div class="r" style="left:879px;top:97.2px;width:14px;height:1.6px;background:#333;"></div>
<div class="r" style="left:879px;top:101.2px;width:9px;height:1.6px;background:#333;"></div>
<div class="r" style="left:879px;top:105.2px;width:14px;height:1.6px;background:#333;"></div>
<div class="r" style="left:879px;top:109.2px;width:9px;height:1.6px;background:#333;"></div>
<div class="sa" style="left:904px;top:94px;font-size:17px;line-height:20px;font-weight:bold;color:#222;font-family:'Liberation Serif',serif;">F</div>
<div class="sa" style="left:912.5px;top:99px;font-size:9.5px;line-height:14px;color:#222;letter-spacing:-.9px;font-weight:bold;">(x)</div>
<div class="r" style="left:931px;top:102px;width:4px;height:8.6px;background:#333;"></div>
<div class="r" style="left:936px;top:97px;width:4.4px;height:13.6px;background:#333;"></div>
<div class="r" style="left:941.4px;top:99.4px;width:3.7px;height:11.2px;background:#333;"></div>
<svg class="r" style="left:956px;top:97px;" width="17" height="15" viewBox="0 0 17 15"><rect x=".7" y=".7" width="15" height="12.6" fill="#fff" stroke="#333" stroke-width="1.3"/><circle cx="4" cy="3.8" r="1.2" fill="#f6a623"/><path d="M1.4 11 L6 6.4 L8.8 9.2 L11 7 L15 11 V12.6 H1.4Z" fill="#35a8f0"/><rect x=".7" y="12" width="15" height="2" fill="#333"/></svg>
<svg class="r" style="left:983px;top:97px;" width="15" height="15" viewBox="0 0 15 15"><path d="M.5 .8 L14 6.2 M.5 .8 L8 14.4" stroke="#333" stroke-width="1.1" fill="none"/></svg>
<svg class="r" style="left:1010px;top:97px;" width="13" height="15" viewBox="0 0 13 15"><rect x=".5" y=".5" width="11" height="13.2" fill="#fff" stroke="#999"/><rect x="2.2" y="2.2" width="7.6" height="1" fill="#333"/><rect x="2.2" y="3.9" width="7.6" height="1" fill="#333"/><rect x="2.2" y="5.7" width="7.6" height="4" fill="#2f8ff0"/><path d="M2.2 9L4.6 7.2L6.2 8.4L7.6 7.6L9.8 9.2V9.7H2.2Z" fill="#8cc6fa"/><rect x="2.2" y="10.8" width="7.6" height="1" fill="#333"/></svg>
<svg class="r" style="left:1034px;top:96px;" width="17" height="17" viewBox="0 0 17 17"><rect x="1.5" y="1.5" width="13" height="13" fill="#f2eef2" stroke="#333" stroke-width="1.3"/><path d="M.2 1.5H2.7M13.3 1.5H15.8M.2 14.5H2.7M13.3 14.5H15.8M1.5 .2V2.7M14.5 .2V2.7M1.5 13.3V15.8M14.5 13.3V15.8" stroke="#333" stroke-width="1.3"/></svg>
<svg class="r" style="left:1053px;top:102px;" width="8" height="5" viewBox="0 0 8 5"><path d="M0 0H7L3.5 4Z" fill="#333"/></svg>
<div class="r" style="left:1068px;top:96px;width:1px;height:16px;background:#e4e2e4;"></div>
<div class="r" style="left:267px;top:117px;width:1023px;height:97px;background:#b3b1b3;"></div>
<div class="r" style="left:267px;top:117px;width:30px;height:17px;background:#acabac;"></div>
<div class="r" style="left:267px;top:134px;width:13px;height:80px;background:#acabac;"></div>
<div class="r" style="left:280px;top:133px;width:1010px;height:1px;background:#8e8d8e;"></div>
<div class="r" style="left:297px;top:117px;width:1px;height:97px;background:#868586;"></div>
<svg class="r" style="left:267px;top:117px;" width="1023" height="97" viewBox="0 0 1023 97"><rect x="40" y="11" width="1" height="5" fill="#c6c4c6"/><rect x="50" y="11" width="1" height="5" fill="#c6c4c6"/><rect x="60" y="11" width="1" height="5" fill="#c6c4c6"/><rect x="70" y="11" width="1" height="5" fill="#c6c4c6"/><rect x="80" y="5" width="1" height="11" fill="#c6c4c6"/><rect x="90" y="11" width="1" height="5" fill="#c6c4c6"/><rect x="100" y="11" width="1" height="5" fill="#c6c4c6"/><rect x="110" y="11" width="1" height="5" fill="#c6c4c6"/><rect x="120" y="11" width="1" height="5" fill="#c6c4c6"/><rect x="130" y="0" width="1" height="16" fill="#c6c4c6"/><rect x="140" y="11" width="1" height="5" fill="#c6c4c6"/><rect x="150" y="11" width="1" height="5" fill="#c6c4c6"/><rect x="160" y="11" width="1" height="5" fill="#c6c4c6"/><rect x="170" y="11" width="1" height="5" fill="#c6c4c6"/><rect x="180" y="5" width="1" height="11" fill="#c6c4c6"/><rect x="190" y="11" width="1" height="5" fill="#c6c4c6"/><rect x="200" y="11" width="1" height="5" fill="#c6c4c6"/><rect x="210" y="11" width="1" height="5" fill="#c6c4c6"/><rect x="220" y="11" width="1" height="5" fill="#c6c4c6"/><rect x="230" y="0" width="1" height="16" fill="#c6c4c6"/><rect x="240" y="11" width="1" height="5" fill="#c6c4c6"/><rect x="250" y="11" width="1" height="5" fill="#c6c4c6"/><rect x="260" y="11" width="1" height="5" fill="#c6c4c6"/><rect x="270" y="11" width="1" height="5" fill="#c6c4c6"/><rect x="280" y="5" width="1" height="11" fill="#c6c4c6"/><rect x="290" y="11" width="1" height="5" fill="#c6c4c6"/><rect x="300" y="11" width="1" height="5" fill="#c6c4c6"/><rect x="310" y="11" width="1" height="5" fill="#c6c4c6"/><rect x="320" y="11" width="1" height="5" fill="#c6c4c6"/><rect x="330" y="0" width="1" height="16" fill="#c6c4c6"/><rect x="340" y="11" width="1" height="5" fill="#c6c4c6"/><rect x="350" y="11" width="1" height="5" fill="#c6c4c6"/><rect x="360" y="11" width="1" height="5" fill="#c6c4c6"/><rect x="370" y="11" width="1" height="5" fill="#c6c4c6"/><rect x="380" y="5" width="1" height="11" fill="#c6c4c6"/><rect x="390" y="11" width="1" height="5" fill="#c6c4c6"/><rect x="400" y="11" width="1" height="5" fill="#c6c4c6"/><rect x="410" y="11" width="1" height="5" fill="#c6c4c6"/><rect x="420" y="11" width="1" height="5" fill="#c6c4c6"/><rect x="430" y="0" width="1" height="16" fill="#c6c4c6"/><rect x="440" y="11" width="1" height="5" fill="#c6c4c6"/><rect x="450" y="11" width="1" height="5" fill="#c6c4c6"/><rect x="460" y="11" width="1" height="5" fill="#c6c4c6"/><rect x="470" y="11" width="1" height="5" fill="#c6c4c6"/><rect x="480" y="5" width="1" height="11" fill="#c6c4c6"/><rect x="490" y="11" width="1" height="5" fill="#c6c4c6"/><rect x="500" y="11" width="1" height="5" fill="#c6c4c6"/><rect x="510" y="11" width="1" height="5" fill="#c6c4c6"/><rect x="520" y="11" width="1" height="5" fill="#c6c4c6"/><rect x="530" y="0" width="1" height="16" fill="#c6c4c6"/><rect x="540" y="11" width="1" height="5" fill="#c6c4c6"/><rect x="550" y="11" width="1" height="5" fill="#c6c4c6"/><rect x="560" y="11" width="1" height="5" fill="#c6c4c6"/><rect x="570" y="11" width="1" height="5" fill="#c6c4c6"/><rect x="580" y="5" width="1" height="11" fill="#c6c4c6"/><rect x="590" y="11" width="1" height="5" fill="#c6c4c6"/><rect x="600" y="11" width="1" height="5" fill="#c6c4c6"/><rect x="610" y="11" width="1" height="5" fill="#c6c4c6"/><rect x="620" y="11" width="1" height="5" fill="#c6c4c6"/><rect x="630" y="0" width="1" height="16" fill="#c6c4c6"/><rect x="640" y="11" width="1" height="5" fill="#c6c4c6"/><rect x="650" y="11" width="1" height="5" fill="#c6c4c6"/><rect x="660" y="11" width="1" height="5" fill="#c6c4c6"/><rect x="670" y="11" width="1" height="5" fill="#c6c4c6"/><rect x="680" y="5" width="1" height="11" fill="#c6c4c6"/><rect x="690" y="11" width="1" height="5" fill="#c6c4c6"/><rect x="700" y="11" width="1" height="5" fill="#c6c4c6"/><rect x="710" y="11" width="1" height="5" fill="#c6c4c6"/><rect x="720" y="11" width="1" height="5" fill="#c6c4c6"/><rect x="730" y="0" width="1" height="16" fill="#c6c4c6"/><rect x="740" y="11" width="1" height="5" fill="#c6c4c6"/><rect x="750" y="11" width="1" height="5" fill="#c6c4c6"/><rect x="760" y="11" width="1" height="5" fill="#c6c4c6"/><rect x="770" y="11" width="1" height="5" fill="#c6c4c6"/><rect x="780" y="5" width="1" height="11" fill="#c6c4c6"/><rect x="790" y="11" width="1" height="5" fill="#c6c4c6"/><rect x="800" y="11" width="1" height="5" fill="#c6c4c6"/><rect x="810" y="11" width="1" height="5" fill="#c6c4c6"/><rect x="820" y="11" width="1" height="5" fill="#c6c4c6"/><rect x="830" y="0" width="1" height="16" fill="#c6c4c6"/><rect x="840" y="11" width="1" height="5" fill="#c6c4c6"/><rect x="850" y="11" width="1" height="5" fill="#c6c4c6"/><rect x="860" y="11" width="1" height="5" fill="#c6c4c6"/><rect x="870" y="11" width="1" height="5" fill="#c6c4c6"/><rect x="880" y="5" width="1" height="11" fill="#c6c4c6"/><rect x="890" y="11" width="1" height="5" fill="#c6c4c6"/><rect x="900" y="11" width="1" height="5" fill="#c6c4c6"/><rect x="910" y="11" width="1" height="5" fill="#c6c4c6"/><rect x="920" y="11" width="1" height="5" fill="#c6c4c6"/><rect x="930" y="0" width="1" height="16" fill="#c6c4c6"/><rect x="940" y="11" width="1" height="5" fill="#c6c4c6"/><rect x="950" y="11" width="1" height="5" fill="#c6c4c6"/><rect x="960" y="11" width="1" height="5" fill="#c6c4c6"/><rect x="970" y="11" width="1" height="5" fill="#c6c4c6"/><rect x="980" y="5" width="1" height="11" fill="#c6c4c6"/><rect x="990" y="11" width="1" height="5" fill="#c6c4c6"/><rect x="1000" y="11" width="1" height="5" fill="#c6c4c6"/><rect x="1010" y="11" width="1" height="5" fill="#c6c4c6"/><rect x="1020" y="11" width="1" height="5" fill="#c6c4c6"/><rect x="24" y="26" width="6" height="1" fill="#c6c4c6"/><rect x="24" y="36" width="6" height="1" fill="#c6c4c6"/><rect x="24" y="46" width="6" height="1" fill="#c6c4c6"/><rect x="24" y="56" width="6" height="1" fill="#c6c4c6"/><rect x="19" y="66" width="11" height="1" fill="#c6c4c6"/><rect x="24" y="76" width="6" height="1" fill="#c6c4c6"/><rect x="24" y="86" width="6" height="1" fill="#c6c4c6"/></svg>
<div class="sa" style="left:299px;top:119px;font-size:9px;line-height:10px;color:#333;">0</div>
<div class="sa" style="left:399px;top:119px;font-size:9px;line-height:10px;color:#333;">100</div>
<div class="sa" style="left:499px;top:119px;font-size:9px;line-height:10px;color:#333;">200</div>
<div class="sa" style="left:599px;top:119px;font-size:9px;line-height:10px;color:#333;">300</div>
<div class="sa" style="left:699px;top:119px;font-size:9px;line-height:10px;color:#333;">400</div>
<div class="sa" style="left:799px;top:119px;font-size:9px;line-height:10px;color:#333;">500</div>
<div class="sa" style="left:899px;top:119px;font-size:9px;line-height:10px;color:#333;">600</div>
<div class="sa" style="left:999px;top:119px;font-size:9px;line-height:10px;color:#333;">700</div>
<div class="sa" style="left:1099px;top:119px;font-size:9px;line-height:10px;color:#333;">800</div>
<div class="sa" style="left:1199px;top:119px;font-size:9px;line-height:10px;color:#333;">900</div>
<div class="sa" style="left:280px;top:134px;font-size:9px;line-height:10px;color:#333;transform:rotate(90deg);transform-origin:0 0;margin-left:10px;">0</div>
<svg class="r" style="left:735px;top:147px;" width="36" height="34" viewBox="0 0 36 34"><path d="M3.2 18C9.5 6 26.5 6 33.2 18C26.5 30 9.5 30 3.2 18Z" fill="none" stroke="#303030" stroke-width="3"/><circle cx="17.6" cy="15.8" r="7.4" fill="#303030"/><path d="M33.7 4.2L4.4 33.4" stroke="#b3b1b3" stroke-width="2.2"/><path d="M31.8 2.3L2.5 31.5" stroke="#303030" stroke-width="2.6"/></svg>
<svg class="r" style="left:787px;top:148px;" width="32" height="32" viewBox="0 0 32 32"><g transform="translate(1.07 30.75) rotate(-45)"><path d="M0 0L7.6-4.3H32.7V4.3H7.6Z" fill="#303030"/><path d="M33.9-4.3H36.5A4.3 4.3 0 0 1 36.5 4.3H33.9Z" fill="#303030"/><rect x="10.3" y="-.8" width="18.5" height="1.6" fill="#b3b1b3"/></g></svg>
<div class="r" style="left:267px;top:214px;width:1023px;height:10px;background:#dfdce0;"></div>
<div class="r" style="left:267px;top:224px;width:1023px;height:430px;background:#fff;"></div>
<div class="r" style="left:1273px;top:243px;width:17px;height:411px;background:#e4e1e5;"></div>
<div class="r" style="left:1274px;top:224px;width:16px;height:19px;background:#fff;"></div>
<div class="r" style="left:1283px;top:621px;width:7px;height:33px;background:#ebe8ec;"></div>
<div class="r" style="left:267px;top:224px;width:25px;height:20px;background:#f3f1f3;"></div>
<div class="r" style="left:292px;top:224px;width:72px;height:20px;background:#d7f1fc;"></div>
<div class="r" style="left:364px;top:224px;width:487px;height:20px;background:#efecef;"></div>
<div class="r" style="left:851px;top:224px;width:422px;height:20px;background:#fff;"></div>
<svg class="r" style="left:272px;top:231px;" width="12" height="10" viewBox="0 0 12 10"><rect x="0" y="0.0" width="2.2" height="2" fill="#b4b2b4"/><rect x="0" y="3.4" width="2.2" height="2" fill="#b4b2b4"/><rect x="0" y="6.8" width="2.2" height="2" fill="#b4b2b4"/><rect x="4" y="0.0" width="2.2" height="2" fill="#b4b2b4"/><rect x="4" y="3.4" width="2.2" height="2" fill="#b4b2b4"/><rect x="4" y="6.8" width="2.2" height="2" fill="#b4b2b4"/><rect x="8" y="0.0" width="2.2" height="2" fill="#b4b2b4"/><rect x="8" y="3.4" width="2.2" height="2" fill="#b4b2b4"/><rect x="8" y="6.8" width="2.2" height="2" fill="#b4b2b4"/></svg>
<div class="t" style="left:325px;top:230px;"><span class="l">A</span></div>
<div class="t" style="left:397px;top:230px;"><span class="l">B</span></div>
<div class="t" style="left:483px;top:230px;"><span class="l">C</span></div>
<div class="t" style="left:582px;top:230px;"><span class="l">D</span></div>
<div class="t" style="left:668px;top:230px;"><span class="l">E</span></div>
<div class="t" style="left:740px;top:230px;"><span class="l">F</span></div>
<div class="t" style="left:812px;top:230px;"><span class="l">G</span></div>
<div class="t" style="left:884px;top:230px;"><span class="l">H</span></div>
<div class="t" style="left:956px;top:230px;"><span class="l">I</span></div>
<div class="t" style="left:1028px;top:230px;"><span class="l">J</span></div>
<div class="t" style="left:1100px;top:230px;"><span class="l">K</span></div>
<div class="t" style="left:1172px;top:230px;"><span class="l">L</span></div>
<div class="t" style="left:1239px;top:230px;"><span class="l">M</span></div>
<svg class="r" style="left:267px;top:224px;" width="1023" height="430" viewBox="0 0 1023 430"><rect x="97" y="0" width="1" height="20" fill="#e3e0e3"/><rect x="169" y="0" width="1" height="20" fill="#e3e0e3"/><rect x="269" y="0" width="1" height="20" fill="#e3e0e3"/><rect x="368" y="0" width="1" height="20" fill="#e3e0e3"/><rect x="440" y="0" width="1" height="20" fill="#e3e0e3"/><rect x="512" y="0" width="1" height="20" fill="#e3e0e3"/><rect x="584" y="0" width="1" height="20" fill="#e3e0e3"/><rect x="656" y="0" width="1" height="20" fill="#e3e0e3"/><rect x="728" y="0" width="1" height="20" fill="#e3e0e3"/><rect x="800" y="0" width="1" height="20" fill="#e3e0e3"/><rect x="872" y="0" width="1" height="20" fill="#e3e0e3"/><rect x="944" y="0" width="1" height="20" fill="#e3e0e3"/><rect x="1006" y="0" width="1" height="20" fill="#e3e0e3"/><rect x="97" y="20" width="1" height="410" fill="#d2d0d2"/><rect x="169" y="20" width="1" height="410" fill="#d2d0d2"/><rect x="269" y="20" width="1" height="410" fill="#d2d0d2"/><rect x="368" y="20" width="1" height="410" fill="#d2d0d2"/><rect x="440" y="20" width="1" height="410" fill="#d2d0d2"/><rect x="512" y="20" width="1" height="410" fill="#d2d0d2"/><rect x="584" y="20" width="1" height="410" fill="#d2d0d2"/><path d="M656.5 397V430" stroke="#000" stroke-width="1" stroke-dasharray="7 2 2 2"/><rect x="728" y="20" width="1" height="410" fill="#d2d0d2"/><rect x="800" y="20" width="1" height="410" fill="#d2d0d2"/><rect x="872" y="20" width="1" height="410" fill="#d2d0d2"/><rect x="944" y="20" width="1" height="410" fill="#d2d0d2"/><rect x="1006" y="20" width="1" height="410" fill="#d2d0d2"/><rect x="0" y="19" width="1006" height="1" fill="#d2d0d2"/><rect x="0" y="38" width="1006" height="1" fill="#d2d0d2"/><rect x="0" y="57" width="1006" height="1" fill="#d2d0d2"/><rect x="0" y="76" width="1006" height="1" fill="#d2d0d2"/><rect x="0" y="95" width="1006" height="1" fill="#d2d0d2"/><rect x="0" y="114" width="1006" height="1" fill="#d2d0d2"/><rect x="0" y="133" width="1006" height="1" fill="#d2d0d2"/><rect x="0" y="152" width="1006" height="1" fill="#d2d0d2"/><rect x="0" y="171" width="1006" height="1" fill="#d2d0d2"/><rect x="0" y="190" width="1006" height="1" fill="#d2d0d2"/><rect x="0" y="209" width="1006" height="1" fill="#d2d0d2"/><rect x="0" y="228" width="1006" height="1" fill="#d2d0d2"/><rect x="0" y="247" width="1006" height="1" fill="#d2d0d2"/><rect x="0" y="266" width="1006" height="1" fill="#d2d0d2"/><rect x="0" y="285" width="1006" height="1" fill="#d2d0d2"/><rect x="0" y="304" width="1006" height="1" fill="#d2d0d2"/><rect x="0" y="323" width="1006" height="1" fill="#d2d0d2"/><rect x="0" y="342" width="1006" height="1" fill="#d2d0d2"/><rect x="0" y="361" width="1006" height="1" fill="#d2d0d2"/><rect x="0" y="380" width="1006" height="1" fill="#d2d0d2"/><rect x="0" y="399" width="1006" height="1" fill="#d2d0d2"/><rect x="0" y="418" width="1006" height="1" fill="#d2d0d2"/><rect x="0" y="437" width="1006" height="1" fill="#d2d0d2"/></svg>
<div class="r" style="left:267px;top:244px;width:25px;height:410px;background:#fff;"></div>
<div class="r" style="left:267px;top:244px;width:25px;height:18px;background:#d7f1fc;"></div>
<div class="t" style="left:276px;top:248px;"><span class="l">1</span></div>
<div class="r" style="left:267px;top:262px;width:25px;height:1px;background:#e3e0e3;"></div>
<div class="t" style="left:276px;top:267px;"><span class="l">2</span></div>
<div class="r" style="left:267px;top:281px;width:25px;height:1px;background:#e3e0e3;"></div>
<div class="t" style="left:276px;top:286px;"><span class="l">3</span></div>
<div class="r" style="left:267px;top:300px;width:25px;height:1px;background:#e3e0e3;"></div>
<div class="t" style="left:276px;top:305px;"><span class="l">4</span></div>
<div class="r" style="left:267px;top:319px;width:25px;height:1px;background:#e3e0e3;"></div>
<div class="t" style="left:276px;top:324px;"><span class="l">5</span></div>
<div class="r" style="left:267px;top:338px;width:25px;height:1px;background:#e3e0e3;"></div>
<div class="t" style="left:276px;top:343px;"><span class="l">6</span></div>
<div class="r" style="left:267px;top:357px;width:25px;height:1px;background:#e3e0e3;"></div>
<div class="t" style="left:276px;top:362px;"><span class="l">7</span></div>
<div class="r" style="left:267px;top:376px;width:25px;height:1px;background:#e3e0e3;"></div>
<div class="t" style="left:276px;top:381px;"><span class="l">8</span></div>
<div class="r" style="left:267px;top:395px;width:25px;height:1px;background:#e3e0e3;"></div>
<div class="t" style="left:276px;top:400px;"><span class="l">9</span></div>
<div class="r" style="left:267px;top:414px;width:25px;height:1px;background:#e3e0e3;"></div>
<div class="t" style="left:272px;top:419px;"><span class="l">10</span></div>
<div class="r" style="left:267px;top:433px;width:25px;height:1px;background:#e3e0e3;"></div>
<div class="t" style="left:272px;top:438px;"><span class="l">11</span></div>
<div class="r" style="left:267px;top:452px;width:25px;height:1px;background:#e3e0e3;"></div>
<div class="t" style="left:272px;top:457px;"><span class="l">12</span></div>
<div class="r" style="left:267px;top:471px;width:25px;height:1px;background:#e3e0e3;"></div>
<div class="t" style="left:272px;top:476px;"><span class="l">13</span></div>
<div class="r" style="left:267px;top:490px;width:25px;height:1px;background:#e3e0e3;"></div>
<div class="t" style="left:272px;top:495px;"><span class="l">14</span></div>
<div class="r" style="left:267px;top:509px;width:25px;height:1px;background:#e3e0e3;"></div>
<div class="t" style="left:272px;top:514px;"><span class="l">15</span></div>
<div class="r" style="left:267px;top:528px;width:25px;height:1px;background:#e3e0e3;"></div>
<div class="t" style="left:272px;top:533px;"><span class="l">16</span></div>
<div class="r" style="left:267px;top:547px;width:25px;height:1px;background:#e3e0e3;"></div>
<div class="t" style="left:272px;top:552px;"><span class="l">17</span></div>
<div class="r" style="left:267px;top:566px;width:25px;height:1px;background:#e3e0e3;"></div>
<div class="t" style="left:272px;top:571px;"><span class="l">18</span></div>
<div class="r" style="left:267px;top:585px;width:25px;height:1px;background:#e3e0e3;"></div>
<div class="t" style="left:272px;top:590px;"><span class="l">19</span></div>
<div class="r" style="left:267px;top:604px;width:25px;height:1px;background:#e3e0e3;"></div>
<div class="t" style="left:272px;top:609px;"><span class="l">20</span></div>
<div class="r" style="left:267px;top:623px;width:25px;height:1px;background:#e3e0e3;"></div>
<div class="t" style="left:272px;top:628px;"><span class="l">21</span></div>
<div class="r" style="left:267px;top:642px;width:25px;height:1px;background:#e3e0e3;"></div>
<div class="t" style="left:272px;top:647px;"><span class="l">22</span></div>
<div class="r" style="left:267px;top:661px;width:25px;height:1px;background:#e3e0e3;"></div>
<div class="r" style="left:291px;top:244px;width:1px;height:410px;background:#d2d0d2;"></div>
<div class="r" style="left:292px;top:244px;width:72px;height:19px;background:linear-gradient(#fff,#d9ecfb);border:2px solid #2b7cf2;box-sizing:border-box;"></div>
<div class="t" style="left:312px;top:248px;">订</div>
<div class="r" style="left:292px;top:263px;width:72px;height:19px;background:#fff;border:1px solid #9ccbf5;border-top:none;box-sizing:border-box;"></div>
<div class="t" style="left:300px;top:267px;"><span class="l">ds1.</span></div>
<svg class="r" style="left:293px;top:264px;" width="6" height="7" viewBox="0 0 6 7"><path d="M2.5 0V5M0 2.5L2.5 5.5L5 2.5" stroke="#777" stroke-width="1" fill="none"/></svg>
<svg class="r" style="left:1275px;top:229px;" width="12" height="8" viewBox="0 0 12 8"><path d="M1 7L6 1.5L11 7" fill="none" stroke="#555" stroke-width="1.2"/></svg>
<div class="r" style="left:1290px;top:38px;width:40px;height:616px;background:#ebe8ec;"></div>
<svg class="r" style="left:1305px;top:49px;" width="8" height="12" viewBox="0 0 8 12"><path d="M1 1V11L6.5 6Z" fill="#b1afb1"/></svg>
<svg class="r" style="left:1302px;top:73px;" width="17" height="16" viewBox="0 0 17 16"><path d="M0 1H15.8M.9 1V15M10.8 1V15M0 11H15.8M10.8 6H15.8M5.9 11V15" fill="none" stroke="#555" stroke-width="1.8"/></svg>
<div class="r" style="left:1294px;top:99px;width:32px;height:28px;background:#f5f4f5;"></div>
<svg class="r" style="left:1302px;top:105px;" width="17" height="17" viewBox="0 0 17 17"><rect x="0" y="0" width="5" height="4.8" rx=".5" fill="#3f97f7"/><rect x="5.8" y="0" width="5.2" height="4.8" rx=".5" fill="#3f97f7"/><rect x="11.8" y="0" width="4.6" height="4.8" rx=".5" fill="#3f97f7"/><rect x="0" y="5.6" width="5" height="5.2" rx=".5" fill="#3f97f7"/><rect x="0" y="11.6" width="5" height="4.4" rx=".5" fill="#3f97f7"/><circle cx="11" cy="10.4" r="5.2" fill="#3f97f7"/><rect x="10.2" y="9.6" width="1.7" height="4" fill="#fff"/><circle cx="11.05" cy="7.6" r="1.05" fill="#fff"/></svg>
<svg class="r" style="left:1302px;top:137px;" width="17" height="17" viewBox="0 0 17 17"><rect x="2" y="2" width="12.2" height="12.2" fill="none" stroke="#555" stroke-width="1.9"/><path d="M2 .4V2.6M14.2 .4V2.6M2 13.6V15.8M14.2 13.6V15.8M.4 2H2.6M13.6 2H15.8M.4 14.2H2.6M13.6 14.2H15.8" stroke="#555" stroke-width="1.7"/></svg>
<svg class="r" style="left:1302px;top:170px;" width="17" height="14" viewBox="0 0 17 14"><rect x="1.1" y="1.9" width="13.8" height="9.8" rx=".8" fill="none" stroke="#555" stroke-width="1.9"/><path d="M8.6 4.9H12.8L10.7 8.4Z" fill="#555"/></svg>
<svg class="r" style="left:1300px;top:202px;" width="20" height="14" viewBox="0 0 20 14"><rect x="5.8" y="1.9" width="12" height="3.4" rx="1.2" fill="none" stroke="#555" stroke-width="1.7"/><rect x="5.8" y="8.7" width="9.6" height="3.4" rx="1.2" fill="none" stroke="#555" stroke-width="1.7"/><path d="M3.6 3.4H1.4V10.6H3.6" fill="none" stroke="#555" stroke-width="1.1"/></svg>
<svg class="r" style="left:1301px;top:232px;" width="12" height="8" viewBox="0 0 12 8"><path d="M1.5 7 a4.3 4.3 0 0 1 8.6 0" fill="none" stroke="#555" stroke-width="1.8"/></svg>
<div class="r" style="left:1330px;top:38px;width:33px;height:616px;background:#f7f6f7;"></div>
<div class="t" style="left:1340px;top:46px;">单元格属性</div>
<div class="r" style="left:1331px;top:65px;width:32px;height:25px;background:#dddadd;"></div>
<div class="t" style="left:1349px;top:72px;">扩展</div>
<div class="r" style="left:1340px;top:105px;width:23px;height:24px;background:#eeecef;"></div>
<div class="t" style="left:1344px;top:113px;">基本</div>
<svg class="r" style="left:1344px;top:139px;" width="14" height="14" viewBox="0 0 14 14"><circle cx="6.5" cy="6.5" r="5.9" fill="#fff" stroke="#b5b3b5" stroke-width="1"/><circle cx="6.5" cy="6.5" r="2.6" fill="#3f97f7"/></svg>
<svg class="r" style="left:1344px;top:162px;" width="14" height="14" viewBox="0 0 14 14"><circle cx="6.5" cy="6.5" r="5.9" fill="#fff" stroke="#b5b3b5" stroke-width="1"/></svg>
<svg class="r" style="left:1344px;top:185px;" width="14" height="14" viewBox="0 0 14 14"><circle cx="6.5" cy="6.5" r="5.9" fill="#fff" stroke="#b5b3b5" stroke-width="1"/></svg>
<svg class="r" style="left:1344px;top:208px;" width="14" height="14" viewBox="0 0 14 14"><circle cx="6.5" cy="6.5" r="5.9" fill="#fff" stroke="#b5b3b5" stroke-width="1"/></svg>
<div class="t" style="left:1360px;top:141px;">单元格</div>
<div class="t" style="left:1360px;top:164px;">不扩展</div>
<div class="t" style="left:1360px;top:187px;">向下</div>
<div class="t" style="left:1360px;top:210px;">向右</div>
<div class="r" style="left:1340px;top:233px;width:23px;height:24px;background:#f0eef0;"></div>
<div class="t" style="left:1344px;top:241px;">高级</div>
<svg class="r" style="left:1346px;top:268px;" width="13" height="13" viewBox="0 0 13 13"><rect width="13" height="13" fill="#3f97f7"/><path d="M2.6 6.6L5.4 9.6L10.6 3.2" fill="none" stroke="#fff" stroke-width="1.7"/></svg>
<svg class="r" style="left:1346px;top:293px;" width="13" height="13" viewBox="0 0 13 13"><rect width="13" height="13" fill="#3f97f7"/><path d="M2.6 6.6L5.4 9.6L10.6 3.2" fill="none" stroke="#fff" stroke-width="1.7"/></svg>
<svg class="r" style="left:1346px;top:318px;" width="13" height="13" viewBox="0 0 13 13"><rect width="13" height="13" fill="#3f97f7"/><path d="M2.6 6.6L5.4 9.6L10.6 3.2" fill="none" stroke="#fff" stroke-width="1.7"/></svg>
<div class="t" style="left:1344px;top:344px;">显示</div>
<div class="t" style="left:1344px;top:377px;">内容</div>
<div class="r" style="left:1349px;top:430px;width:13px;height:13px;background:#fbfbfb;border:1px solid #b9b7b9;box-sizing:border-box;border-radius:1px;"></div>
<div class="t" style="left:1345px;top:463px;">插入</div>
<div class="r" style="left:1340px;top:495px;width:23px;height:24px;background:#eeecef;"></div>
<div class="t" style="left:1344px;top:503px;">分页</div>
<div class="r" style="left:1346px;top:530px;width:13px;height:13px;background:#fbfbfb;border:1px solid #b9b7b9;box-sizing:border-box;border-radius:1px;"></div>
<div class="r" style="left:1346px;top:555px;width:13px;height:13px;background:#fbfbfb;border:1px solid #b9b7b9;box-sizing:border-box;border-radius:1px;"></div>
<div class="r" style="left:1346px;top:590px;width:13px;height:13px;background:#fbfbfb;border:1px solid #b9b7b9;box-sizing:border-box;border-radius:1px;"></div>
<div class="r" style="left:1346px;top:615px;width:13px;height:13px;background:#fbfbfb;border:1px solid #b9b7b9;box-sizing:border-box;border-radius:1px;"></div>
<svg class="r" style="left:1346px;top:650px;" width="13" height="13" viewBox="0 0 13 13"><rect width="13" height="13" fill="#3f97f7"/><path d="M2.6 6.6L5.4 9.6L10.6 3.2" fill="none" stroke="#fff" stroke-width="1.7"/></svg>
<div class="r" style="left:319px;top:237px;width:1023px;height:385px;background:#f7f7f7;box-sizing:border-box;border:1px solid;border-color:#d4d0c8 #404040 #404040 #d4d0c8;box-shadow:inset 1px 1px 0 #fff, inset -1px -1px 0 #808080, inset 2px 2px 0 #d4d0c8, inset -2px -2px 0 #d4d0c8;"></div>
<div class="r" style="left:323px;top:241px;width:1015px;height:18px;background:#848284;"></div>
<svg class="r" style="left:325px;top:242px;" width="16" height="16" viewBox="0 0 16 16"><path d="M1 0H5V4H11V11H5V16H0V1Z" fill="#0b7ce0"/><path d="M4.6 0H16V16H11V4H4.6Z" fill="#21b0f0"/></svg>
<div class="tb" style="left:343px;top:245px;color:#dedad2;">全局查找与替换</div>
<div class="r" style="left:1320px;top:243px;width:16px;height:14px;background:#e9e6df;box-sizing:border-box;border:1px solid;border-color:#fff #404040 #404040 #fff;box-shadow:inset -1px -1px 0 #808080;"></div>
<svg class="r" style="left:1323px;top:246px;" width="10" height="8" viewBox="0 0 10 8"><path d="M1.4 .3L8.6 7M8.6 .3L1.4 7" stroke="#000" stroke-width="1.8"/></svg>
<div class="r" style="left:323px;top:259px;width:99px;height:359px;background:#fff;"></div>
<div class="r" style="left:422px;top:259px;width:1px;height:359px;background:#dedede;"></div>
<div class="r" style="left:323px;top:266px;width:99px;height:23px;background:#419bf9;"></div>
<div class="t" style="left:348px;top:274px;color:#fff;">模板内容</div>
<div class="t" style="left:354px;top:295px;">设置项</div>
<div class="t" style="left:348px;top:573px;color:#3391f8;text-decoration:underline;text-underline-offset:.5px;">帮助文档</div>
<div class="t" style="left:443px;top:282px;">查找元素<span class="l">:</span></div>
<div class="r" style="left:503px;top:275px;width:331px;height:25px;background:#fff;border:1px solid #dcdcdc;box-sizing:border-box;"></div>
<div class="r" style="left:809px;top:275px;width:25px;height:25px;background:#d9d6da;"></div>
<svg class="r" style="left:816px;top:284px;" width="10" height="7" viewBox="0 0 10 7"><path d="M.6 .8L5 5.2L9.4 .8" fill="none" stroke="#333" stroke-width="1.2"/></svg>
<div class="t" style="left:510px;top:282px;">单元格</div>
<div class="t" style="left:895px;top:282px;">查找范围<span class="l">:</span></div>
<div class="r" style="left:955px;top:275px;width:351px;height:25px;background:#fff;border:1px solid #dcdcdc;box-sizing:border-box;"></div>
<div class="r" style="left:1281px;top:275px;width:25px;height:25px;background:#d9d6da;"></div>
<svg class="r" style="left:1288px;top:284px;" width="10" height="7" viewBox="0 0 10 7"><path d="M.6 .8L5 5.2L9.4 .8" fill="none" stroke="#333" stroke-width="1.2"/></svg>
<div class="t" style="left:962px;top:282px;">当前模板</div>
<div class="r" style="left:443px;top:310px;width:391px;height:25px;background:#fff;border:1px solid #dcdcdc;box-sizing:border-box;"></div>
<div class="r" style="left:809px;top:310px;width:25px;height:25px;background:#d9d6da;"></div>
<svg class="r" style="left:816px;top:319px;" width="10" height="7" viewBox="0 0 10 7"><path d="M.6 .8L5 5.2L9.4 .8" fill="none" stroke="#333" stroke-width="1.2"/></svg>
<div class="t" style="left:447px;top:317px;color:#9c9c9c;">输入搜索内容，按下回车搜索</div>
<svg class="r" style="left:855px;top:315px;" width="19" height="14" viewBox="0 0 19 14"><path d="M.5 4.5H17.5L12.5 .8" fill="none" stroke="#a6a6a6" stroke-width="1.3"/><path d="M18 9H1L6 12.8" fill="none" stroke="#a6a6a6" stroke-width="1.3"/></svg>
<div class="r" style="left:895px;top:310px;width:411px;height:25px;background:#fff;border:1px solid #dcdcdc;box-sizing:border-box;"></div>
<div class="r" style="left:1281px;top:310px;width:25px;height:25px;background:#d9d6da;"></div>
<svg class="r" style="left:1288px;top:319px;" width="10" height="7" viewBox="0 0 10 7"><path d="M.6 .8L5 5.2L9.4 .8" fill="none" stroke="#333" stroke-width="1.2"/></svg>
<div class="t" style="left:899px;top:317px;color:#9c9c9c;">输入替换内容</div>
<div class="r" style="left:447px;top:351px;width:13px;height:13px;background:#fbfbfb;border:1px solid #b3b3b3;box-sizing:border-box;border-radius:1px;"></div>
<div class="t" style="left:464px;top:352px;">通配符</div>
<div class="r" style="left:1208px;top:380px;width:44px;height:24px;background:#fff;border:1px solid #dcdcdc;box-sizing:border-box;"></div>
<div class="t" style="left:1218px;top:388px;">查找</div>
<div class="r" style="left:1262px;top:380px;width:44px;height:24px;background:#fff;border:1px solid #dcdcdc;box-sizing:border-box;"></div>
<div class="t" style="left:1272px;top:388px;color:#9c9c9c;">替换</div>
<div class="r" style="left:443px;top:421px;width:874px;height:25px;background:#f0ecf0;"></div>
<div class="r" style="left:443px;top:446px;width:874px;height:2px;background:#e2e0e2;"></div>
<div class="r" style="left:443px;top:448px;width:875px;height:170px;background:#f8f8f8;border-left:1px solid #e6e6e6;border-right:1px solid #e9e9e9;box-sizing:border-box;"></div>
<svg class="r" style="left:462px;top:429px;" width="13" height="13" viewBox="0 0 13 13"><rect width="13" height="13" fill="#3f97f7"/><path d="M2.6 6.6L5.4 9.6L10.6 3.2" fill="none" stroke="#fff" stroke-width="1.7"/></svg>
<div class="r" style="left:492px;top:425px;width:1px;height:19px;background:#c9c5b9;"></div>
<div class="t" style="left:499px;top:430px;">查找内容</div>
<div class="r" style="left:621px;top:425px;width:1px;height:19px;background:#c9c5b9;"></div>
<div class="t" style="left:623px;top:430px;">替换后内容</div>
<div class="r" style="left:750px;top:425px;width:1px;height:19px;background:#c9c5b9;"></div>
<div class="t" style="left:757px;top:430px;">模板名称</div>
<div class="r" style="left:879px;top:425px;width:1px;height:19px;background:#c9c5b9;"></div>
<div class="t" style="left:886px;top:430px;">所在<span class="l">sheet</span></div>
<div class="r" style="left:1008px;top:425px;width:1px;height:19px;background:#c9c5b9;"></div>
<div class="t" style="left:1015px;top:430px;">分布组件</div>
<div class="r" style="left:1137px;top:425px;width:1px;height:19px;background:#c9c5b9;"></div>
<div class="t" style="left:1144px;top:430px;">位置信息</div>
<div class="r" style="left:1266px;top:425px;width:1px;height:19px;background:#c9c5b9;"></div>
<div class="t" style="left:1273px;top:430px;">操作</div>
<div class="r" style="left:1315px;top:425px;width:1px;height:19px;background:#c9c5b9;"></div>
<div class="r" style="left:36px;top:38px;width:211px;height:523px;background:#e8e4e8;box-sizing:border-box;border:1px solid #dedbdf;border-top:none;border-radius:0 0 5px 5px;box-shadow:0 1px 3px rgba(0,0,0,.12);"></div>
<div class="r" style="left:37px;top:37px;width:51px;height:2px;background:#e8e4e8;"></div>
<div class="t" style="left:42px;top:49px;color:#333;">工作簿</div>
<div class="r" style="left:82px;top:55px;width:151px;height:1px;background:#444;"></div>
<svg class="r" style="left:46.5px;top:66px;" width="15" height="15" viewBox="0 0 16 16"><path d="M10.5 14H.7V.7H13.6V7.5" fill="none" stroke="#333" stroke-width="1.2"/><rect x="2.6" y="3" width="1.8" height="1.8" fill="#333"/><rect x="2.6" y="6.6" width="1.8" height="1.8" fill="#333"/><rect x="2.6" y="10.2" width="1.8" height="1.8" fill="#333"/><path d="M6 3.9H11.5M6 7.5H10M6 11.1H8.6" stroke="#333" stroke-width="1.2"/><path d="M13 7.8L9.6 12H12L11 15.6L15.2 10.6H12.8Z" fill="#333"/></svg>
<div class="t" style="left:72px;top:68px;">控件显示增强</div>
<svg class="r" style="left:47px;top:87px;" width="14" height="14" viewBox="0 0 15 15.6"><ellipse cx="7.5" cy="3" rx="6.6" ry="2.8" fill="#333"/><path d="M.9 5.4C.9 8.8 14.1 8.8 14.1 5.4V7.6C14.1 11 .9 11 .9 7.6Z" fill="#333"/><path d="M.9 9.8C.9 13.2 14.1 13.2 14.1 9.8V12C14.1 15.4 .9 15.4 .9 12Z" fill="#333"/></svg>
<div class="t" style="left:72px;top:89px;">模板数据集<span class="l">(D)...</span></div>
<svg class="r" style="left:46px;top:107px;" width="16" height="16" viewBox="0 0 16 16"><path d="M1.5 9V.7H10L14 4.6V15.6H1.5V14" fill="none" stroke="#333" stroke-width="1.1"/><path d="M10 .7V4.6H14" fill="none" stroke="#333" stroke-width="1"/><path d="M3.6 2.6L7.6 7.6M7.6 2.6L3.6 7.6" stroke="#333" stroke-width="1.1"/><rect x="5.6" y="9.6" width="7.2" height="4.4" fill="#1d9f78"/><path d="M7.4 10.6V13M9.2 10.6V13M11 10.6V13" stroke="#e8e4e8" stroke-width=".9"/><path d="M0 11.8H4M2.6 10.2L4.2 11.8L2.6 13.4" fill="none" stroke="#333" stroke-width="1"/></svg>
<div class="t" style="left:72px;top:110px;"><span class="l">Excel</span>导入标记<span class="l">...</span></div>
<svg class="r" style="left:46px;top:128px;" width="16" height="16" viewBox="0 0 16 16"><circle cx="7.4" cy="7.6" r="6.7" fill="none" stroke="#333" stroke-width="1.2"/><ellipse cx="7.4" cy="7.6" rx="3" ry="6.7" fill="none" stroke="#333" stroke-width="1.1"/><path d="M.8 7.6H14M1.8 4.2H13M1.8 11H8" stroke="#333" stroke-width="1.1"/><circle cx="12" cy="12.2" r="3.9" fill="#e8e4e8"/><circle cx="12" cy="12.2" r="2.3" fill="none" stroke="#333" stroke-width="2.2" stroke-dasharray="1.5 .9"/><circle cx="12" cy="12.2" r="1.6" fill="#333"/><circle cx="12" cy="12.2" r=".7" fill="#e8e4e8"/></svg>
<div class="t" style="left:72px;top:131px;">模板<span class="l">Web</span>属性<span class="l">(W)...</span></div>
<svg class="r" style="left:46px;top:149px;" width="16" height="16" viewBox="0 0 16 16"><path d="M3.6 9.4V.7H15.3V15.3H5.5" fill="none" stroke="#333" stroke-width="1.2"/><path d="M.7 11.2H5.5V15.3C2.5 15.3 .7 14 .7 11.2Z" fill="none" stroke="#333" stroke-width="1.1"/><path d="M4.2 6.6H9.4V4L13.2 7.8L9.4 11.6V9H4.2Z" fill="#19b35a"/></svg>
<div class="t" style="left:72px;top:152px;">模板导出属性<span class="l">(E)...</span></div>
<svg class="r" style="left:46.5px;top:171px;" width="15" height="15" viewBox="0 0 16 16"><rect x=".7" y=".7" width="13.6" height="13.6" fill="none" stroke="#333" stroke-width="1.2"/><path d="M5.4 11.6V3.6H8.2A2.3 2.3 0 0 1 8.2 8.2H5.4" fill="none" stroke="#333" stroke-width="1.3"/></svg>
<div class="t" style="left:72px;top:173px;">模板参数<span class="l">(A)...</span></div>
<svg class="r" style="left:46.5px;top:192px;" width="15" height="15" viewBox="0 0 16 16"><rect x=".7" y=".7" width="13.8" height="13.8" fill="none" stroke="#333" stroke-width="1.2"/><path d="M8.2 7L12 3.2M9 3H12.2V6.2M7 8.2L3.2 12M3 8.8V12.2H6.2" fill="none" stroke="#333" stroke-width="1.1"/></svg>
<div class="t" style="left:72px;top:194px;"><span class="l">PC</span>端自适应属性<span class="l">(T)...</span></div>
<svg class="r" style="left:46.5px;top:213px;" width="15" height="15" viewBox="0 0 16 16"><rect x="2.6" y=".7" width="9.8" height="14" rx="1" fill="none" stroke="#333" stroke-width="1.3"/><rect x="2.6" y="11.6" width="9.8" height="3.2" fill="#333"/><rect x="6.6" y="12.6" width="1.8" height="1.1" fill="#e8e4e8"/></svg>
<div class="t" style="left:72px;top:215px;">移动端属性<span class="l">(P)...</span></div>
<svg class="r" style="left:46.5px;top:234px;" width="15" height="15" viewBox="0 0 16 16"><rect x="3.2" y=".8" width="10" height="4" fill="none" stroke="#333" stroke-width="1.3"/><rect x=".4" y="4.6" width="15.6" height="7.2" rx="1.2" fill="#333"/><rect x="3.2" y="9.4" width="10" height="5.2" fill="#e8e4e8" stroke="#333" stroke-width="1.3"/></svg>
<div class="t" style="left:72px;top:236px;">打印设置<span class="l">(P)...</span></div>
<svg class="r" style="left:46.5px;top:255px;" width="15" height="15" viewBox="0 0 16 16"><circle cx="7.5" cy="3.6" r="2.7" fill="none" stroke="#333" stroke-width="1.2"/><path d="M5.6 5.8C6 7.2 5.8 8 5 8.8M9.4 5.8C9 7.2 9.2 8 10 8.8" fill="none" stroke="#333" stroke-width="1.1"/><ellipse cx="7.5" cy="11" rx="6.8" ry="2.7" fill="none" stroke="#333" stroke-width="1.2"/><path d="M.7 11.4V12.6C.7 15.6 14.3 15.6 14.3 12.6V11.4" fill="none" stroke="#333" stroke-width="1.1"/></svg>
<div class="t" style="left:72px;top:257px;">水印<span class="l">(M)...</span></div>
<div class="t" style="left:42px;top:279px;color:#333;">当前<span class="l">Sheet</span></div>
<div class="r" style="left:100px;top:285px;width:133px;height:1px;background:#444;"></div>
<svg class="r" style="left:46.5px;top:296px;" width="15" height="15" viewBox="0 0 16 16"><rect x=".7" y=".7" width="13.8" height="13.8" fill="none" stroke="#333" stroke-width="1.2"/><path d="M7.6 .7V14.5" stroke="#333" stroke-width="1.1"/><path d="M2.6 4H5.8M2.6 6.4H5.8M2.6 8.8H5.8M2.6 11.2H5.8M9.4 4H12.6M9.4 6.4H12.6M9.4 8.8H12.6M9.4 11.2H12.6" stroke="#333" stroke-width="1"/></svg>
<div class="t" style="left:72px;top:298px;">页面设置<span class="l">(U)...</span></div>
<svg class="r" style="left:46.5px;top:317px;" width="15" height="15" viewBox="0 0 16 16"><rect x=".7" y=".7" width="13.8" height="13.8" fill="none" stroke="#333" stroke-width="1.2"/><path d="M.7 3.8H14.5" stroke="#333" stroke-width="1.1"/><path d="M4.4 10.4V6.2M2.8 7.8L4.4 6.2L6 7.8" stroke="#333" stroke-width="1" fill="none"/></svg>
<div class="t" style="left:72px;top:319px;">报表页眉<span class="l">(H)...</span></div>
<svg class="r" style="left:46.5px;top:338px;" width="15" height="15" viewBox="0 0 16 16"><rect x=".7" y=".7" width="13.8" height="13.8" fill="none" stroke="#333" stroke-width="1.2"/><path d="M.7 11.4H14.5" stroke="#333" stroke-width="1.1"/><path d="M10.8 4.8V9M9.2 7.4L10.8 9L12.4 7.4" stroke="#333" stroke-width="1" fill="none"/></svg>
<div class="t" style="left:72px;top:340px;">报表页脚<span class="l">(F)...</span></div>
<svg class="r" style="left:46px;top:359px;" width="16" height="14" viewBox="0 0 16 15"><rect x=".7" y=".7" width="14.6" height="13.6" fill="#fff" stroke="#333" stroke-width="1.2"/><circle cx="4.4" cy="4.4" r="1.7" fill="#e8412f"/><path d="M1.3 12L5.4 7.6L8 10.2L10.8 7L14.7 11.2V13.7H1.3Z" fill="#19b35a"/></svg>
<div class="t" style="left:72px;top:361px;">纸张背景<span class="l">(B)...</span></div>
<div class="r" style="left:68px;top:382px;width:165px;height:1px;background:repeating-linear-gradient(90deg,#b3b0b3 0 3px,transparent 3px 4px);"></div>
<svg class="r" style="left:46.5px;top:388px;" width="15" height="15" viewBox="0 0 16 16"><path d="M8 14H.7V.7H14.3V7" fill="none" stroke="#333" stroke-width="1.2"/><path d="M.7 3.6H14.3" stroke="#333" stroke-width="1.1"/><path d="M2.8 6.6H7.6M2.8 9.4H6" stroke="#333" stroke-width="1.1"/><circle cx="11.6" cy="11.8" r="2.6" fill="none" stroke="#333" stroke-width="2.4" stroke-dasharray="1.6 1"/><circle cx="11.6" cy="11.8" r="1.9" fill="#333"/><circle cx="11.6" cy="11.8" r=".8" fill="#e8e4e8"/></svg>
<div class="t" style="left:72px;top:390px;">报表填报属性<span class="l">(R)...</span></div>
<svg class="r" style="left:46.5px;top:409px;" width="15" height="15" viewBox="0 0 16 16"><path d="M.5 3.2H6.6M.5 6H6.6M.5 8.8H6.6M.5 11.6H6.6M.5 14.4H6.6M8.6 3.2H15M8.6 6H15M8.6 8.8H15M8.6 11.6H15M8.6 14.4H15" stroke="#333" stroke-width="1.3"/></svg>
<div class="t" style="left:72px;top:411px;">报表分栏<span class="l">(C)...</span></div>
<svg class="r" style="left:46.5px;top:430px;" width="15" height="15" viewBox="0 0 16 16"><path d="M6.4 14.3H.7V.7H14.3V6" fill="none" stroke="#333" stroke-width="1.2"/><path d="M.7 4.2H14.3M4.4 4.2V14.3" stroke="#333" stroke-width="1.1"/><rect x="7.4" y="9.6" width="7.4" height="5.4" fill="#333"/><path d="M9 9.6V8.2A2.1 2.1 0 0 1 13.2 8.2V9.6" fill="none" stroke="#333" stroke-width="1.2"/></svg>
<div class="t" style="left:72px;top:432px;">重复与冻结设置<span class="l">(G)...</span></div>
<svg class="r" style="left:46.5px;top:451px;" width="15" height="15" viewBox="0 0 16 16"><path d="M5 13.4H.7V.7H14.3V6.4" fill="none" stroke="#333" stroke-width="1.2"/><path d="M.7 3.6H14.3" stroke="#333" stroke-width="1.1"/><path d="M2.6 6.4H12M2.6 9H6" stroke="#333" stroke-width="1"/><circle cx="6.4" cy="13" r="1.5" fill="none" stroke="#333" stroke-width="1.8" stroke-dasharray="1.2 .8"/><circle cx="6.4" cy="13" r="1.1" fill="#333"/><circle cx="11.8" cy="11.6" r="2.4" fill="none" stroke="#333" stroke-width="2.2" stroke-dasharray="1.5 1"/><circle cx="11.8" cy="11.6" r="1.8" fill="#333"/><circle cx="11.8" cy="11.6" r=".8" fill="#e8e4e8"/></svg>
<div class="t" style="left:72px;top:453px;">报表引擎属性<span class="l">(E)...</span></div>
<div class="t" style="left:42px;top:475px;color:#333;">权限编辑</div>
<div class="r" style="left:94px;top:481px;width:139px;height:1px;background:#444;"></div>
<svg class="r" style="left:46px;top:491px;" width="16" height="16" viewBox="0 0 16 16"><path d="M.7 14.3V.7H15.3V14.3M.7 5H15.3M5.4 .7V14.3M10.4 .7V5M.7 9.6H5.4" fill="none" stroke="#333" stroke-width="1.2"/><circle cx="10.4" cy="8.2" r="2.6" fill="#333"/><path d="M5.6 15C5.6 11.8 7.6 10.6 10.4 10.6S15.2 11.8 15.2 15Z" fill="#333"/></svg>
<div class="t" style="left:72px;top:494px;">进入权限编辑</div>
<div class="t" style="left:42px;top:516px;color:#333;">查找<span class="l">/</span>替换</div>
<div class="r" style="left:100px;top:522px;width:133px;height:1px;background:#444;"></div>
<div class="r" style="left:68px;top:530px;width:169px;height:21px;background:#419bf9;border-radius:3px;"></div>
<svg class="r" style="left:46.5px;top:533px;" width="15" height="15" viewBox="0 0 16 16"><path d="M4 2.6A5.8 5.8 0 1 1 1.6 8.4" fill="none" stroke="#333" stroke-width="1.5"/><path d="M1.6 8.4A5.8 5.8 0 0 1 2.2 4.4" fill="none" stroke="#333" stroke-width="1.3" stroke-dasharray="1.6 1.3"/><path d="M11 11L14.8 14.6" stroke="#333" stroke-width="1.8"/></svg>
<div class="t" style="left:72px;top:535px;color:#fff;">全局查找与替换</div>
<div class="sa" style="left:197px;top:534px;font-size:10px;line-height:12px;color:#222;font-weight:bold;transform:scaleX(.92);transform-origin:0 0;">Ctrl-F</div>
</div>
</body></html>
